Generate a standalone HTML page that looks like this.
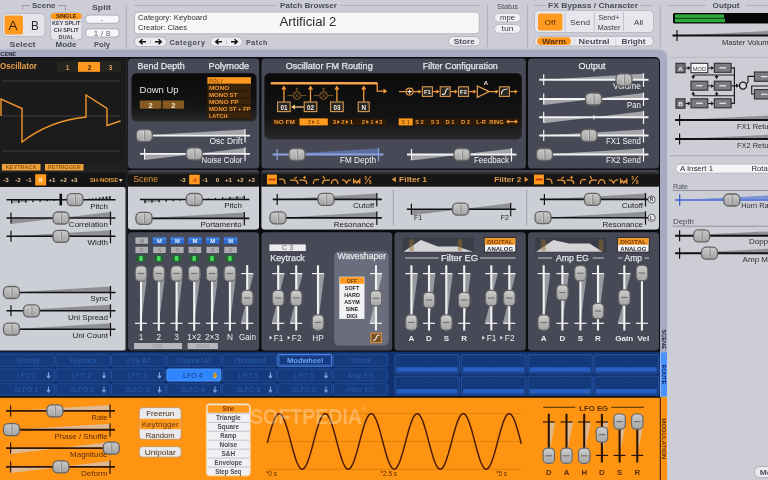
<!DOCTYPE html>
<html><head><meta charset="utf-8"><title>Surge</title>
<style>
html,body{margin:0;padding:0;background:#cdced5;overflow:hidden}
body{width:768px;height:480px;position:relative;font-family:"Liberation Sans", sans-serif}
svg{position:absolute;left:0;top:0;display:block;will-change:transform}
svg text{font-family:"Liberation Sans", sans-serif}
</style></head><body>
<svg width="768" height="480" viewBox="0 0 768 480">
<defs>
<linearGradient id="hg" x1="0" y1="0" x2="0" y2="1"><stop offset="0" stop-color="#cacaca"/><stop offset="0.5" stop-color="#b6b6b6"/><stop offset="1" stop-color="#a2a2a2"/></linearGradient>
<linearGradient id="vg" x1="0" y1="0" x2="0" y2="1"><stop offset="0" stop-color="#cecece"/><stop offset="0.5" stop-color="#b8b8b8"/><stop offset="1" stop-color="#a6a6a6"/></linearGradient>
<linearGradient id="dispg" x1="0" y1="0" x2="0" y2="1"><stop offset="0" stop-color="#0b0b0c"/><stop offset="0.7" stop-color="#141415"/><stop offset="1" stop-color="#2a2a2c"/></linearGradient>
<linearGradient id="oscg" x1="0" y1="0" x2="0" y2="1"><stop offset="0" stop-color="#1a1a1a"/><stop offset="0.8" stop-color="#1c1c1c"/><stop offset="1" stop-color="#2c2c2c"/></linearGradient>
<linearGradient id="stripg" x1="0" y1="0" x2="0" y2="1"><stop offset="0" stop-color="#474a56"/><stop offset="0.1" stop-color="#3a3c44"/><stop offset="0.28" stop-color="#181614"/><stop offset="1" stop-color="#181614"/></linearGradient>
<linearGradient id="frg" x1="0" y1="0" x2="0" y2="1"><stop offset="0" stop-color="#cdced5"/><stop offset="1" stop-color="#a8aac4"/></linearGradient>
</defs>
<rect x="0.00" y="0.00" width="768.00" height="480.00" fill="#cdced5" />
<path d="M0,48.5 H659 a8.5,8.5 0 0 1 8.5,8.5 V352.5 H0 Z" fill="#bcbdce"/>
<path d="M0,50 H659 a8,8 0 0 1 8,8 V352.5 H0 Z" fill="#a8aac4"/>
<text x="-3.60" y="56.10" font-size="5.3" fill="#23252e" text-anchor="start" font-weight="bold" textLength="19.8" lengthAdjust="spacingAndGlyphs" >SCENE</text>
<line x1="22.50" y1="5.00" x2="22.50" y2="10.00" stroke="#9a9cab" stroke-width="1.1" />
<line x1="22.50" y1="5.50" x2="30.00" y2="5.50" stroke="#9a9cab" stroke-width="1.1" />
<line x1="58.00" y1="5.50" x2="65.50" y2="5.50" stroke="#9a9cab" stroke-width="1.1" />
<line x1="65.50" y1="5.00" x2="65.50" y2="10.00" stroke="#9a9cab" stroke-width="1.1" />
<text x="43.80" y="8.00" font-size="7.5" fill="#4a4c5a" text-anchor="middle" font-weight="bold" textLength="23.5" lengthAdjust="spacingAndGlyphs" >Scene</text>
<rect x="2.50" y="13.50" width="42.50" height="23.00" fill="#e4e5ea" rx="4" stroke="#b9bbc8" stroke-width="1" />
<rect x="4.50" y="15.50" width="18.50" height="19.00" fill="#ff9a1e" rx="2" />
<text x="12.90" y="29.70" font-size="13.5" fill="#3a2408" text-anchor="middle" font-weight="normal" >A</text>
<text x="35.00" y="29.70" font-size="13.5" fill="#26262c" text-anchor="middle" font-weight="normal" textLength="7.8" lengthAdjust="spacingAndGlyphs" >B</text>
<text x="22.50" y="47.00" font-size="7.5" fill="#4a4c5a" text-anchor="middle" font-weight="bold" textLength="26.0" lengthAdjust="spacingAndGlyphs" >Select</text>
<rect x="50.50" y="12.50" width="31.50" height="27.50" fill="#e6e7ec" rx="4" stroke="#b9bbc8" stroke-width="1" />
<rect x="51.00" y="13.00" width="30.50" height="6.50" fill="#ff9a1e" rx="3" />
<text x="66.20" y="18.30" font-size="5.5" fill="#3a2a18" text-anchor="middle" font-weight="bold" >SINGLE</text>
<text x="66.20" y="25.30" font-size="5.5" fill="#3f414c" text-anchor="middle" font-weight="bold" >KEY SPLIT</text>
<text x="66.20" y="32.30" font-size="5.5" fill="#3f414c" text-anchor="middle" font-weight="bold" >CH SPLIT</text>
<text x="66.20" y="39.30" font-size="5.5" fill="#3f414c" text-anchor="middle" font-weight="bold" >DUAL</text>
<text x="66.00" y="47.00" font-size="7.5" fill="#4a4c5a" text-anchor="middle" font-weight="bold" textLength="21.0" lengthAdjust="spacingAndGlyphs" >Mode</text>
<text x="101.50" y="10.00" font-size="7.5" fill="#4a4c5a" text-anchor="middle" font-weight="bold" textLength="19.0" lengthAdjust="spacingAndGlyphs" >Split</text>
<rect x="85.50" y="15.00" width="33.80" height="8.30" fill="#f6f6f8" rx="4.1" stroke="#a9abb9" stroke-width="1" />
<text x="102.00" y="21.50" font-size="7" fill="#555" text-anchor="middle" font-weight="normal" >-</text>
<rect x="85.50" y="28.80" width="33.80" height="8.30" fill="#f6f6f8" rx="4.1" stroke="#a9abb9" stroke-width="1" />
<text x="102.00" y="35.70" font-size="7" fill="#6a6c78" text-anchor="middle" font-weight="normal" textLength="17.0" lengthAdjust="spacingAndGlyphs" >1 / 8</text>
<text x="102.00" y="47.00" font-size="7.5" fill="#4a4c5a" text-anchor="middle" font-weight="bold" textLength="16.0" lengthAdjust="spacingAndGlyphs" >Poly</text>
<line x1="126.30" y1="5.00" x2="126.30" y2="47.50" stroke="#aeb0be" stroke-width="1.2" />
<line x1="134.00" y1="5.50" x2="277.00" y2="5.50" stroke="#aeb0be" stroke-width="1" />
<line x1="340.00" y1="5.50" x2="480.00" y2="5.50" stroke="#aeb0be" stroke-width="1" />
<text x="308.50" y="8.00" font-size="7.5" fill="#4a4c5a" text-anchor="middle" font-weight="bold" textLength="57.0" lengthAdjust="spacingAndGlyphs" >Patch Browser</text>
<rect x="134.50" y="12.00" width="344.80" height="21.80" fill="#f7f7f8" rx="3.5" stroke="#b4b6c2" stroke-width="1" />
<text x="138.00" y="19.80" font-size="7.5" fill="#2e2e34" text-anchor="start" font-weight="normal" textLength="69.0" lengthAdjust="spacingAndGlyphs" >Category: Keyboard</text>
<text x="138.00" y="30.30" font-size="7.5" fill="#2e2e34" text-anchor="start" font-weight="normal" textLength="49.0" lengthAdjust="spacingAndGlyphs" >Creator: Claes</text>
<text x="279.40" y="26.00" font-size="12" fill="#2a2a30" text-anchor="start" font-weight="normal" textLength="57.0" lengthAdjust="spacingAndGlyphs" >Artificial 2</text>
<rect x="134.50" y="37.00" width="32.00" height="9.50" fill="#ececf0" rx="4.7" stroke="#b3b5c2" stroke-width="1" />
<line x1="150.50" y1="39.50" x2="150.50" y2="44.00" stroke="#c4c6d0" stroke-width="0.8" />
<path d="M146.0,41.7 H140.0 M142.5,39.3 L139.7,41.7 L142.5,44.1" stroke="#111" fill="none" stroke-width="1.4" />
<path d="M155.0,41.7 H161.0 M158.5,39.3 L161.3,41.7 L158.5,44.1" stroke="#111" fill="none" stroke-width="1.4" />
<text x="169.50" y="44.80" font-size="7.5" fill="#4a4c5a" text-anchor="start" font-weight="bold" textLength="36.0" lengthAdjust="spacingAndGlyphs" letter-spacing="0.6">Category</text>
<rect x="210.50" y="37.00" width="32.00" height="9.50" fill="#ececf0" rx="4.7" stroke="#b3b5c2" stroke-width="1" />
<line x1="226.50" y1="39.50" x2="226.50" y2="44.00" stroke="#c4c6d0" stroke-width="0.8" />
<path d="M222.0,41.7 H216.0 M218.5,39.3 L215.7,41.7 L218.5,44.1" stroke="#111" fill="none" stroke-width="1.4" />
<path d="M231.0,41.7 H237.0 M234.5,39.3 L237.3,41.7 L234.5,44.1" stroke="#111" fill="none" stroke-width="1.4" />
<text x="246.00" y="44.80" font-size="7.5" fill="#4a4c5a" text-anchor="start" font-weight="bold" textLength="22.0" lengthAdjust="spacingAndGlyphs" letter-spacing="0.6">Patch</text>
<rect x="448.50" y="36.50" width="31.50" height="9.50" fill="#ececf0" rx="4.7" stroke="#b3b5c2" stroke-width="1" />
<text x="464.30" y="44.00" font-size="7.5" fill="#4a4c58" text-anchor="middle" font-weight="bold" textLength="21.0" lengthAdjust="spacingAndGlyphs" >Store</text>
<line x1="487.50" y1="5.00" x2="487.50" y2="47.50" stroke="#aeb0be" stroke-width="1.2" />
<text x="507.50" y="8.50" font-size="7" fill="#4a4c5a" text-anchor="middle" font-weight="normal" textLength="21.0" lengthAdjust="spacingAndGlyphs" >Status</text>
<rect x="494.50" y="13.20" width="26.00" height="8.80" fill="#f1f1f4" rx="4.4" stroke="#b9bbc8" stroke-width="1" />
<text x="507.50" y="20.00" font-size="7.5" fill="#3a3c46" text-anchor="middle" font-weight="normal" textLength="15.0" lengthAdjust="spacingAndGlyphs" >mpe</text>
<rect x="494.50" y="24.50" width="26.00" height="8.80" fill="#f1f1f4" rx="4.4" stroke="#b9bbc8" stroke-width="1" />
<text x="507.50" y="31.30" font-size="7.5" fill="#3a3c46" text-anchor="middle" font-weight="normal" textLength="12.0" lengthAdjust="spacingAndGlyphs" >tun</text>
<line x1="527.50" y1="5.00" x2="527.50" y2="47.50" stroke="#aeb0be" stroke-width="1.2" />
<line x1="534.00" y1="5.50" x2="546.00" y2="5.50" stroke="#aeb0be" stroke-width="1" />
<line x1="640.00" y1="5.50" x2="653.00" y2="5.50" stroke="#aeb0be" stroke-width="1" />
<text x="593.00" y="8.00" font-size="7.5" fill="#4a4c5a" text-anchor="middle" font-weight="bold" textLength="90.0" lengthAdjust="spacingAndGlyphs" >FX Bypass / Character</text>
<rect x="534.50" y="10.50" width="119.00" height="22.00" fill="#e6e7ec" rx="4" stroke="#b9bbc8" stroke-width="1" />
<rect x="538.00" y="13.50" width="24.50" height="17.00" fill="#ff9a1e" rx="2" />
<text x="550.00" y="24.70" font-size="7.5" fill="#5a3408" text-anchor="middle" font-weight="normal" textLength="11.0" lengthAdjust="spacingAndGlyphs" >Off</text>
<line x1="565.00" y1="12.00" x2="565.00" y2="31.00" stroke="#c0c2cd" stroke-width="1" />
<line x1="594.30" y1="12.00" x2="594.30" y2="31.00" stroke="#c0c2cd" stroke-width="1" />
<line x1="623.50" y1="12.00" x2="623.50" y2="31.00" stroke="#c0c2cd" stroke-width="1" />
<text x="580.00" y="24.70" font-size="7.5" fill="#3a3c46" text-anchor="middle" font-weight="normal" textLength="20.0" lengthAdjust="spacingAndGlyphs" >Send</text>
<text x="609.00" y="20.20" font-size="7" fill="#3a3c46" text-anchor="middle" font-weight="normal" textLength="21.0" lengthAdjust="spacingAndGlyphs" >Send+</text>
<text x="609.00" y="29.50" font-size="7" fill="#3a3c46" text-anchor="middle" font-weight="normal" textLength="23.0" lengthAdjust="spacingAndGlyphs" >Master</text>
<text x="638.50" y="24.70" font-size="7.5" fill="#3a3c46" text-anchor="middle" font-weight="normal" textLength="9.0" lengthAdjust="spacingAndGlyphs" >All</text>
<rect x="534.50" y="36.30" width="119.00" height="9.70" fill="#ececf0" rx="4.8" stroke="#b3b5c2" stroke-width="1" />
<rect x="537.00" y="37.30" width="34.00" height="7.70" fill="#ff9a1e" rx="3.8" />
<text x="554.00" y="44.00" font-size="7.5" fill="#5a2e08" text-anchor="middle" font-weight="bold" textLength="24.0" lengthAdjust="spacingAndGlyphs" >Warm</text>
<text x="594.00" y="44.00" font-size="7.5" fill="#4a4c58" text-anchor="middle" font-weight="bold" textLength="31.0" lengthAdjust="spacingAndGlyphs" >Neutral</text>
<text x="633.50" y="44.00" font-size="7.5" fill="#4a4c58" text-anchor="middle" font-weight="bold" textLength="24.0" lengthAdjust="spacingAndGlyphs" >Bright</text>
<line x1="574.50" y1="38.00" x2="574.50" y2="44.50" stroke="#c8cad4" stroke-width="0.8" />
<line x1="615.70" y1="38.00" x2="615.70" y2="44.50" stroke="#c8cad4" stroke-width="0.8" />
<line x1="660.30" y1="5.00" x2="660.30" y2="47.50" stroke="#aeb0be" stroke-width="1.2" />
<line x1="667.00" y1="5.50" x2="706.00" y2="5.50" stroke="#aeb0be" stroke-width="1" />
<line x1="746.00" y1="5.50" x2="768.00" y2="5.50" stroke="#aeb0be" stroke-width="1" />
<text x="726.00" y="8.00" font-size="7.5" fill="#4a4c5a" text-anchor="middle" font-weight="bold" textLength="27.0" lengthAdjust="spacingAndGlyphs" >Output</text>
<rect x="673.00" y="13.00" width="100.00" height="10.50" fill="#060606" rx="1.5" />
<rect x="675.00" y="14.30" width="49.00" height="3.60" fill="#2fa83c" />
<rect x="675.00" y="18.60" width="50.00" height="3.60" fill="#2fa83c" />
<polygon points="677.00,35.40 800.00,29.40 800.00,35.40" fill="rgba(0,0,0,0.30)" />
<line x1="672.50" y1="35.40" x2="805.00" y2="35.40" stroke="#111" stroke-width="2" />
<line x1="677.00" y1="29.90" x2="677.00" y2="40.90" stroke="#111" stroke-width="1.2" />
<text x="721.90" y="44.60" font-size="7.5" fill="#2e2e34" text-anchor="start" font-weight="normal" textLength="51.0" lengthAdjust="spacingAndGlyphs" >Master Volume</text>
<path d="M0,57 H655 a5,5 0 0 1 5,5 V352 H0 Z" fill="#0c0c0e"/>
<rect x="-3.00" y="58.30" width="128.50" height="128.20" fill="url(#oscg)" rx="2" />
<rect x="125.50" y="57.50" width="2.00" height="294.00" fill="#24262c" />
<text x="0.00" y="68.50" font-size="8.5" fill="#e8a04a" text-anchor="start" font-weight="bold" textLength="37.0" lengthAdjust="spacingAndGlyphs" >Oscillator</text>
<rect x="57.00" y="61.50" width="64.00" height="10.50" fill="#26241f" rx="1" />
<rect x="78.00" y="62.00" width="22.00" height="9.80" fill="#ff9a1e" />
<text x="67.50" y="69.50" font-size="6.5" fill="#d9a05a" text-anchor="middle" font-weight="bold" >1</text>
<text x="89.50" y="69.50" font-size="6.5" fill="#3a2208" text-anchor="middle" font-weight="bold" >2</text>
<text x="110.50" y="69.50" font-size="6.5" fill="#d9a05a" text-anchor="middle" font-weight="bold" >3</text>
<line x1="2.00" y1="81.00" x2="120.00" y2="81.00" stroke="#3f3f3f" stroke-width="1" />
<line x1="2.00" y1="116.00" x2="120.00" y2="116.00" stroke="#3f3f3f" stroke-width="1" />
<line x1="2.00" y1="151.00" x2="120.00" y2="151.00" stroke="#3f3f3f" stroke-width="1" />
<path d="M1,116 L1,99 L22,108.5 L22,142 C40,128 62,119.5 86,117 L86,95 L107,108.5 L107,125.5 L120.5,121" stroke="#f0962a" fill="none" stroke-width="1.4" stroke-linejoin="miter"/>
<rect x="2.00" y="164.00" width="38.50" height="6.50" fill="#f2a23a" />
<text x="21.20" y="169.30" font-size="5.2" fill="#8a5a18" text-anchor="middle" font-weight="bold" textLength="31.0" lengthAdjust="spacingAndGlyphs" >KEYTRACK</text>
<rect x="45.00" y="164.00" width="38.50" height="6.50" fill="#f2a23a" />
<text x="64.20" y="169.30" font-size="5.2" fill="#8a5a18" text-anchor="middle" font-weight="bold" textLength="33.0" lengthAdjust="spacingAndGlyphs" >RETRIGGER</text>
<rect x="0.00" y="172.50" width="125.50" height="14.00" fill="#141414" />
<rect x="35.20" y="174.20" width="11.00" height="11.30" fill="#ff9a1e" />
<text x="6.00" y="182.30" font-size="6.2" fill="#e8c79a" text-anchor="middle" font-weight="bold" >-3</text>
<text x="18.00" y="182.30" font-size="6.2" fill="#e8c79a" text-anchor="middle" font-weight="bold" >-2</text>
<text x="29.00" y="182.30" font-size="6.2" fill="#e8c79a" text-anchor="middle" font-weight="bold" >-1</text>
<text x="52.00" y="182.30" font-size="6.2" fill="#e8c79a" text-anchor="middle" font-weight="bold" >+1</text>
<text x="63.50" y="182.30" font-size="6.2" fill="#e8c79a" text-anchor="middle" font-weight="bold" >+2</text>
<text x="74.00" y="182.30" font-size="6.2" fill="#e8c79a" text-anchor="middle" font-weight="bold" >+3</text>
<text x="40.70" y="182.30" font-size="6.2" fill="#fff" text-anchor="middle" font-weight="bold" >0</text>
<text x="90.00" y="182.20" font-size="6" fill="#f0a040" text-anchor="start" font-weight="bold" textLength="28.0" lengthAdjust="spacingAndGlyphs" >SH-NOISE</text>
<polygon points="118.80,179.00 122.60,179.00 120.70,182.00" fill="#f6d8b0" />
<rect x="-3.00" y="187.00" width="128.50" height="163.60" fill="#cdcfd6" rx="2" />
<polygon points="11.20,199.70 11.20,202.90 26.90,201.70 26.90,199.70" fill="rgba(0,0,0,0.25)" />
<polygon points="98.50,199.70 98.50,198.10 110.50,196.50 110.50,199.70" fill="rgba(0,0,0,0.25)" />
<line x1="11.70" y1="199.70" x2="11.70" y2="203.50" stroke="#111" stroke-width="1.25" />
<line x1="18.80" y1="199.70" x2="18.80" y2="203.07" stroke="#111" stroke-width="1.25" />
<line x1="25.90" y1="199.70" x2="25.90" y2="202.63" stroke="#111" stroke-width="1.25" />
<line x1="33.00" y1="199.70" x2="33.00" y2="202.20" stroke="#111" stroke-width="1.25" />
<line x1="40.10" y1="199.70" x2="40.10" y2="201.77" stroke="#111" stroke-width="1.25" />
<line x1="47.20" y1="199.70" x2="47.20" y2="201.33" stroke="#111" stroke-width="1.25" />
<line x1="54.30" y1="199.70" x2="54.30" y2="200.90" stroke="#111" stroke-width="1.25" />
<line x1="110.00" y1="196.00" x2="110.00" y2="199.70" stroke="#111" stroke-width="1.25" />
<line x1="106.50" y1="196.43" x2="106.50" y2="199.70" stroke="#111" stroke-width="1.25" />
<line x1="103.00" y1="196.87" x2="103.00" y2="199.70" stroke="#111" stroke-width="1.25" />
<line x1="99.50" y1="197.30" x2="99.50" y2="199.70" stroke="#111" stroke-width="1.25" />
<line x1="96.00" y1="197.73" x2="96.00" y2="199.70" stroke="#111" stroke-width="1.25" />
<line x1="92.50" y1="198.17" x2="92.50" y2="199.70" stroke="#111" stroke-width="1.25" />
<line x1="89.00" y1="198.60" x2="89.00" y2="199.70" stroke="#111" stroke-width="1.25" />
<line x1="6.50" y1="199.70" x2="115.50" y2="199.70" stroke="#111" stroke-width="1.6" />
<rect x="59.50" y="193.70" width="2.60" height="11.70" fill="#111" />
<rect x="67.00" y="193.70" width="16.00" height="12.00" fill="url(#hg)" rx="4.6" stroke="#636363" stroke-width="1.3" />
<line x1="74.50" y1="195.00" x2="74.50" y2="204.40" stroke="#d2d2d2" stroke-width="0.9" />
<line x1="75.40" y1="195.00" x2="75.40" y2="204.40" stroke="#808080" stroke-width="0.9" />
<text x="108.00" y="208.50" font-size="8" fill="#222" text-anchor="end" font-weight="normal" >Pitch</text>
<polygon points="11.00,218.00 11.00,224.00 60.75,218.00" fill="rgba(0,0,0,0.30)" />
<polygon points="60.75,218.00 110.50,212.00 110.50,218.00" fill="rgba(0,0,0,0.30)" />
<line x1="6.50" y1="218.00" x2="115.50" y2="218.00" stroke="#111" stroke-width="1.6" />
<line x1="11.00" y1="212.50" x2="11.00" y2="223.50" stroke="#111" stroke-width="1.2" />
<line x1="110.50" y1="211.50" x2="110.50" y2="225.00" stroke="#111" stroke-width="1.2" />
<text x="108.00" y="226.80" font-size="8" fill="#222" text-anchor="end" font-weight="normal" >Correlation</text>
<rect x="53.00" y="212.00" width="16.00" height="12.00" fill="url(#hg)" rx="4.6" stroke="#636363" stroke-width="1.3" />
<line x1="60.50" y1="213.30" x2="60.50" y2="222.70" stroke="#d2d2d2" stroke-width="0.9" />
<line x1="61.40" y1="213.30" x2="61.40" y2="222.70" stroke="#808080" stroke-width="0.9" />
<polygon points="11.00,236.30 110.50,230.30 110.50,236.30" fill="rgba(0,0,0,0.30)" />
<line x1="6.50" y1="236.30" x2="115.50" y2="236.30" stroke="#111" stroke-width="1.6" />
<line x1="11.00" y1="230.80" x2="11.00" y2="241.80" stroke="#111" stroke-width="1.2" />
<line x1="110.50" y1="229.80" x2="110.50" y2="243.30" stroke="#111" stroke-width="1.2" />
<text x="108.00" y="245.10" font-size="8" fill="#222" text-anchor="end" font-weight="normal" >Width</text>
<rect x="53.00" y="230.30" width="16.00" height="12.00" fill="url(#hg)" rx="4.6" stroke="#636363" stroke-width="1.3" />
<line x1="60.50" y1="231.60" x2="60.50" y2="241.00" stroke="#d2d2d2" stroke-width="0.9" />
<line x1="61.40" y1="231.60" x2="61.40" y2="241.00" stroke="#808080" stroke-width="0.9" />
<polygon points="11.00,292.50 110.50,286.50 110.50,292.50" fill="rgba(0,0,0,0.30)" />
<line x1="6.50" y1="292.50" x2="115.50" y2="292.50" stroke="#111" stroke-width="1.6" />
<line x1="110.50" y1="286.00" x2="110.50" y2="299.50" stroke="#111" stroke-width="1.2" />
<text x="108.00" y="301.30" font-size="8" fill="#222" text-anchor="end" font-weight="normal" >Sync</text>
<rect x="3.50" y="286.50" width="16.00" height="12.00" fill="url(#hg)" rx="4.6" stroke="#636363" stroke-width="1.3" />
<line x1="11.00" y1="287.80" x2="11.00" y2="297.20" stroke="#d2d2d2" stroke-width="0.9" />
<line x1="11.90" y1="287.80" x2="11.90" y2="297.20" stroke="#808080" stroke-width="0.9" />
<polygon points="11.00,310.80 110.50,304.80 110.50,310.80" fill="rgba(0,0,0,0.30)" />
<line x1="6.50" y1="310.80" x2="115.50" y2="310.80" stroke="#111" stroke-width="1.6" />
<line x1="11.00" y1="305.30" x2="11.00" y2="316.30" stroke="#111" stroke-width="1.2" />
<line x1="110.50" y1="304.30" x2="110.50" y2="317.80" stroke="#111" stroke-width="1.2" />
<text x="108.00" y="319.60" font-size="8" fill="#222" text-anchor="end" font-weight="normal" >Uni Spread</text>
<rect x="23.50" y="304.80" width="16.00" height="12.00" fill="url(#hg)" rx="4.6" stroke="#636363" stroke-width="1.3" />
<line x1="31.00" y1="306.10" x2="31.00" y2="315.50" stroke="#d2d2d2" stroke-width="0.9" />
<line x1="31.90" y1="306.10" x2="31.90" y2="315.50" stroke="#808080" stroke-width="0.9" />
<polygon points="11.00,329.20 110.50,323.20 110.50,329.20" fill="rgba(0,0,0,0.30)" />
<line x1="6.50" y1="329.20" x2="115.50" y2="329.20" stroke="#111" stroke-width="1.6" />
<line x1="110.50" y1="322.70" x2="110.50" y2="336.20" stroke="#111" stroke-width="1.2" />
<text x="108.00" y="338.00" font-size="8" fill="#222" text-anchor="end" font-weight="normal" >Uni Count</text>
<rect x="3.50" y="323.20" width="16.00" height="12.00" fill="url(#hg)" rx="4.6" stroke="#636363" stroke-width="1.3" />
<line x1="11.00" y1="324.50" x2="11.00" y2="333.90" stroke="#d2d2d2" stroke-width="0.9" />
<line x1="11.90" y1="324.50" x2="11.90" y2="333.90" stroke="#808080" stroke-width="0.9" />
<rect x="128.00" y="58.50" width="131.20" height="109.90" fill="#474a56" rx="3.5" />
<text x="137.60" y="68.80" font-size="8.7" fill="#e6e6ea" text-anchor="start" font-weight="normal" textLength="47.0" lengthAdjust="spacingAndGlyphs" stroke="#e6e6ea" stroke-width="0.25">Bend Depth</text>
<text x="208.60" y="68.80" font-size="8.7" fill="#e6e6ea" text-anchor="start" font-weight="normal" textLength="40.5" lengthAdjust="spacingAndGlyphs" stroke="#e6e6ea" stroke-width="0.25">Polymode</text>
<rect x="131.50" y="73.20" width="125.00" height="48.30" fill="url(#dispg)" rx="5" />
<text x="139.60" y="92.70" font-size="9" fill="#e6e6e6" text-anchor="start" font-weight="normal" textLength="39.0" lengthAdjust="spacingAndGlyphs" >Down Up</text>
<rect x="139.80" y="100.50" width="21.50" height="8.20" fill="#865a22" />
<rect x="162.60" y="100.50" width="21.50" height="8.20" fill="#865a22" />
<text x="150.50" y="107.60" font-size="7.5" fill="#f4ead8" text-anchor="middle" font-weight="bold" >2</text>
<text x="173.30" y="107.60" font-size="7.5" fill="#f4ead8" text-anchor="middle" font-weight="bold" >2</text>
<rect x="207.20" y="77.00" width="43.90" height="42.30" fill="#1e1206" />
<rect x="207.40" y="77.20" width="43.50" height="6.50" fill="#ff9a1e" />
<text x="208.90" y="82.80" font-size="5.8" fill="#9a5a14" text-anchor="start" font-weight="bold" textLength="14.4" lengthAdjust="spacingAndGlyphs" >POLY</text>
<rect x="207.40" y="84.20" width="43.50" height="6.40" fill="#3a240a" />
<text x="208.90" y="89.80" font-size="5.8" fill="#ee9838" text-anchor="start" font-weight="bold" textLength="20.4" lengthAdjust="spacingAndGlyphs" >MONO</text>
<rect x="207.40" y="91.20" width="43.50" height="6.40" fill="#3a240a" />
<text x="208.90" y="96.80" font-size="5.8" fill="#ee9838" text-anchor="start" font-weight="bold" textLength="28.5" lengthAdjust="spacingAndGlyphs" >MONO ST</text>
<rect x="207.40" y="98.20" width="43.50" height="6.40" fill="#3a240a" />
<text x="208.90" y="103.80" font-size="5.8" fill="#ee9838" text-anchor="start" font-weight="bold" textLength="29.6" lengthAdjust="spacingAndGlyphs" >MONO FP</text>
<rect x="207.40" y="105.20" width="43.50" height="6.40" fill="#3a240a" />
<text x="208.90" y="110.80" font-size="5.8" fill="#ee9838" text-anchor="start" font-weight="bold" textLength="41.8" lengthAdjust="spacingAndGlyphs" >MONO ST + FP</text>
<rect x="207.40" y="112.20" width="43.50" height="6.40" fill="#3a240a" />
<text x="208.90" y="117.80" font-size="5.8" fill="#ee9838" text-anchor="start" font-weight="bold" textLength="18.7" lengthAdjust="spacingAndGlyphs" >LATCH</text>
<polygon points="140.50,135.60 245.00,129.60 245.00,135.60" fill="rgba(255,255,255,0.5)" />
<line x1="136.00" y1="135.60" x2="250.00" y2="135.60" stroke="#f2f2f2" stroke-width="1.9" />
<line x1="245.00" y1="129.10" x2="245.00" y2="142.60" stroke="#f2f2f2" stroke-width="1.2" />
<text x="242.50" y="144.40" font-size="8.3" fill="#f4f4f4" text-anchor="end" font-weight="normal" textLength="33.0" lengthAdjust="spacingAndGlyphs" >Osc Drift</text>
<rect x="136.30" y="129.60" width="16.00" height="12.00" fill="url(#hg)" rx="4.6" stroke="#636363" stroke-width="1.3" />
<line x1="143.80" y1="130.90" x2="143.80" y2="140.30" stroke="#d2d2d2" stroke-width="0.9" />
<line x1="144.70" y1="130.90" x2="144.70" y2="140.30" stroke="#808080" stroke-width="0.9" />
<polygon points="144.60,153.90 144.60,159.90 194.80,153.90" fill="rgba(255,255,255,0.5)" />
<polygon points="194.80,153.90 245.00,147.90 245.00,153.90" fill="rgba(255,255,255,0.5)" />
<line x1="140.10" y1="153.90" x2="250.00" y2="153.90" stroke="#f2f2f2" stroke-width="1.9" />
<line x1="144.60" y1="148.40" x2="144.60" y2="159.40" stroke="#f2f2f2" stroke-width="1.2" />
<line x1="245.00" y1="147.40" x2="245.00" y2="160.90" stroke="#f2f2f2" stroke-width="1.2" />
<text x="242.50" y="162.70" font-size="8.3" fill="#f4f4f4" text-anchor="end" font-weight="normal" textLength="41.0" lengthAdjust="spacingAndGlyphs" >Noise Color</text>
<rect x="186.30" y="147.90" width="16.00" height="12.00" fill="url(#hg)" rx="4.6" stroke="#636363" stroke-width="1.3" />
<line x1="193.80" y1="149.20" x2="193.80" y2="158.60" stroke="#d2d2d2" stroke-width="0.9" />
<line x1="194.70" y1="149.20" x2="194.70" y2="158.60" stroke="#808080" stroke-width="0.9" />
<rect x="261.50" y="58.50" width="264.40" height="109.90" fill="#474a56" rx="3.5" />
<text x="285.70" y="68.80" font-size="8.7" fill="#e6e6ea" text-anchor="start" font-weight="normal" textLength="87.0" lengthAdjust="spacingAndGlyphs" stroke="#e6e6ea" stroke-width="0.25">Oscillator FM Routing</text>
<text x="422.80" y="68.80" font-size="8.7" fill="#e6e6ea" text-anchor="start" font-weight="normal" textLength="75.0" lengthAdjust="spacingAndGlyphs" stroke="#e6e6ea" stroke-width="0.25">Filter Configuration</text>
<rect x="264.40" y="73.20" width="257.40" height="66.30" fill="url(#dispg)" rx="5" />
<path d="M270.8,83.3 H377.4" stroke="#f6a64a" fill="none" stroke-width="2.6" />
<path d="M377.2,83.3 V91.2 H384" stroke="#f29a38" fill="none" stroke-width="1.3" />
<polygon points="383.50,88.60 387.30,91.20 383.50,93.80" fill="#f29a38" />
<line x1="283.90" y1="101.80" x2="283.90" y2="88.00" stroke="#f29a38" stroke-width="1.3" />
<polygon points="281.30,89.50 283.90,85.60 286.50,89.50" fill="#f29a38" />
<rect x="277.60" y="102.00" width="12.60" height="9.60" fill="#2a2622" stroke="#d89a50" stroke-width="1.1" />
<text x="283.90" y="109.50" font-size="6.3" fill="#f6f0e6" text-anchor="middle" font-weight="bold" >01</text>
<line x1="310.50" y1="101.80" x2="310.50" y2="88.00" stroke="#f29a38" stroke-width="1.3" />
<polygon points="307.90,89.50 310.50,85.60 313.10,89.50" fill="#f29a38" />
<rect x="304.20" y="102.00" width="12.60" height="9.60" fill="#2a2622" stroke="#d89a50" stroke-width="1.1" />
<text x="310.50" y="109.50" font-size="6.3" fill="#f6f0e6" text-anchor="middle" font-weight="bold" >02</text>
<line x1="336.90" y1="101.80" x2="336.90" y2="88.00" stroke="#f29a38" stroke-width="1.3" />
<polygon points="334.30,89.50 336.90,85.60 339.50,89.50" fill="#f29a38" />
<rect x="330.60" y="102.00" width="12.60" height="9.60" fill="#2a2622" stroke="#d89a50" stroke-width="1.1" />
<text x="336.90" y="109.50" font-size="6.3" fill="#f6f0e6" text-anchor="middle" font-weight="bold" >03</text>
<line x1="363.70" y1="101.80" x2="363.70" y2="88.00" stroke="#f29a38" stroke-width="1.3" />
<polygon points="361.10,89.50 363.70,85.60 366.30,89.50" fill="#f29a38" />
<rect x="358.20" y="102.00" width="11.00" height="9.60" fill="#2a2622" stroke="#d89a50" stroke-width="1.1" />
<text x="363.70" y="109.50" font-size="6.3" fill="#f6f0e6" text-anchor="middle" font-weight="bold" >N</text>
<circle cx="296.9" cy="95.6" r="3.7" fill="none" stroke="#7a5524" stroke-width="1.1"/>
<path d="M294.59999999999997,93.3 L299.2,97.89999999999999 M294.59999999999997,97.89999999999999 L299.2,93.3" stroke="#7a5524" fill="none" stroke-width="1" />
<line x1="287.40" y1="95.60" x2="292.70" y2="95.60" stroke="#7a5524" stroke-width="1" />
<line x1="301.10" y1="95.60" x2="306.40" y2="95.60" stroke="#7a5524" stroke-width="1" />
<line x1="296.90" y1="91.50" x2="296.90" y2="88.50" stroke="#7a5524" stroke-width="1" />
<polygon points="295.30,89.20 296.90,87.20 298.50,89.20" fill="#7a5524" />
<circle cx="323.6" cy="95.6" r="3.7" fill="none" stroke="#7a5524" stroke-width="1.1"/>
<path d="M321.3,93.3 L325.90000000000003,97.89999999999999 M321.3,97.89999999999999 L325.90000000000003,93.3" stroke="#7a5524" fill="none" stroke-width="1" />
<line x1="314.10" y1="95.60" x2="319.40" y2="95.60" stroke="#7a5524" stroke-width="1" />
<line x1="327.80" y1="95.60" x2="333.10" y2="95.60" stroke="#7a5524" stroke-width="1" />
<line x1="323.60" y1="91.50" x2="323.60" y2="88.50" stroke="#7a5524" stroke-width="1" />
<polygon points="322.00,89.20 323.60,87.20 325.20,89.20" fill="#7a5524" />
<line x1="294.00" y1="107.00" x2="303.80" y2="107.00" stroke="#f6c78c" stroke-width="1.3" />
<polygon points="295.00,104.40 291.00,107.00 295.00,109.60" fill="#f6c78c" />
<rect x="271.50" y="118.40" width="114.50" height="7.00" fill="#2c1a07" />
<rect x="398.70" y="118.40" width="120.50" height="7.00" fill="#2c1a07" />
<text x="274.00" y="123.80" font-size="5.8" fill="#f29a38" text-anchor="start" font-weight="bold" textLength="21.0" lengthAdjust="spacingAndGlyphs" >NO FM</text>
<rect x="299.50" y="118.40" width="28.30" height="7.00" fill="#ff9a1e" />
<text x="309.30" y="124.00" font-size="6" fill="#8a5210" text-anchor="middle" font-weight="bold" >2</text>
<polygon points="312.20,119.90 315.00,121.90 312.20,123.90" fill="#8a5210" />
<text x="317.90" y="124.00" font-size="6" fill="#8a5210" text-anchor="middle" font-weight="bold" >1</text>
<text x="334.30" y="124.00" font-size="6" fill="#f29a38" text-anchor="middle" font-weight="bold" >3</text>
<polygon points="337.20,119.90 340.00,121.90 337.20,123.90" fill="#f29a38" />
<text x="342.90" y="124.00" font-size="6" fill="#f29a38" text-anchor="middle" font-weight="bold" >2</text>
<polygon points="345.80,119.90 348.60,121.90 345.80,123.90" fill="#f29a38" />
<text x="351.50" y="124.00" font-size="6" fill="#f29a38" text-anchor="middle" font-weight="bold" >1</text>
<text x="363.40" y="124.00" font-size="6" fill="#f29a38" text-anchor="middle" font-weight="bold" >2</text>
<polygon points="366.30,119.90 369.10,121.90 366.30,123.90" fill="#f29a38" />
<text x="372.00" y="124.00" font-size="6" fill="#f29a38" text-anchor="middle" font-weight="bold" >1</text>
<polygon points="377.70,119.90 374.90,121.90 377.70,123.90" fill="#f29a38" />
<text x="380.60" y="124.00" font-size="6" fill="#f29a38" text-anchor="middle" font-weight="bold" >3</text>
<line x1="399.00" y1="91.60" x2="405.80" y2="91.60" stroke="#f29a38" stroke-width="1.2" />
<circle cx="409.6" cy="91.6" r="3.5" fill="none" stroke="#f29a38" stroke-width="1.2"/>
<path d="M407.4,91.6 H411.8 M409.6,89.39999999999999 V93.8" stroke="#f6f0e6" fill="none" stroke-width="1.1" />
<line x1="413.20" y1="91.60" x2="419.50" y2="91.60" stroke="#f29a38" stroke-width="1.2" />
<polygon points="418.50,89.40 421.50,91.60 418.50,93.80" fill="#f29a38" />
<rect x="422.40" y="86.80" width="10.00" height="9.60" fill="#2a2622" stroke="#d89a50" stroke-width="1.1" />
<text x="427.40" y="93.90" font-size="5.8" fill="#f6f0e6" text-anchor="middle" font-weight="bold" >F1</text>
<line x1="433.00" y1="91.60" x2="437.50" y2="91.60" stroke="#f29a38" stroke-width="1.2" />
<polygon points="436.50,89.40 439.50,91.60 436.50,93.80" fill="#f29a38" />
<rect x="440.20" y="86.80" width="10.00" height="9.60" fill="#2a2622" stroke="#d89a50" stroke-width="1.1" />
<path d="M442,94.39999999999999 H444.2 C446,94.39999999999999 445,88.8 447.5,88.8 H448.6" stroke="#f6f0e6" fill="none" stroke-width="1.1" />
<line x1="451.00" y1="91.60" x2="455.70" y2="91.60" stroke="#f29a38" stroke-width="1.2" />
<polygon points="454.70,89.40 457.70,91.60 454.70,93.80" fill="#f29a38" />
<rect x="458.50" y="86.80" width="10.00" height="9.60" fill="#2a2622" stroke="#d89a50" stroke-width="1.1" />
<text x="463.50" y="93.90" font-size="5.8" fill="#f6f0e6" text-anchor="middle" font-weight="bold" >F2</text>
<line x1="469.30" y1="91.60" x2="474.40" y2="91.60" stroke="#f29a38" stroke-width="1.2" />
<polygon points="473.40,89.40 476.40,91.60 473.40,93.80" fill="#f29a38" />
<path d="M477.3,86.0 L489.2,91.6 L477.3,97.19999999999999 Z" stroke="#e8a052" fill="none" stroke-width="1.2" />
<text x="485.80" y="85.20" font-size="5.8" fill="#f6f0e6" text-anchor="middle" font-weight="bold" >A</text>
<line x1="490.00" y1="91.60" x2="496.60" y2="91.60" stroke="#f29a38" stroke-width="1.2" />
<polygon points="495.60,89.40 498.60,91.60 495.60,93.80" fill="#f29a38" />
<rect x="499.40" y="86.80" width="10.00" height="9.60" fill="#2a2622" stroke="#d89a50" stroke-width="1.1" />
<path d="M501.3,94.6 C501.3,90.6 503,89.0 507.6,89.0" stroke="#f6f0e6" fill="none" stroke-width="1.1" />
<line x1="510.20" y1="91.60" x2="515.80" y2="91.60" stroke="#f29a38" stroke-width="1.2" />
<polygon points="514.80,89.40 517.80,91.60 514.80,93.80" fill="#f29a38" />
<rect x="398.70" y="118.40" width="14.00" height="7.00" fill="#ff9a1e" />
<text x="405.70" y="124.00" font-size="5.8" fill="#8a5210" text-anchor="middle" font-weight="bold" >S 1</text>
<text x="419.50" y="123.80" font-size="5.8" fill="#f29a38" text-anchor="middle" font-weight="bold" >S 2</text>
<text x="435.00" y="123.80" font-size="5.8" fill="#f29a38" text-anchor="middle" font-weight="bold" >S 3</text>
<text x="450.00" y="123.80" font-size="5.8" fill="#f29a38" text-anchor="middle" font-weight="bold" >D 1</text>
<text x="465.50" y="123.80" font-size="5.8" fill="#f29a38" text-anchor="middle" font-weight="bold" >D 2</text>
<text x="481.00" y="123.80" font-size="5.8" fill="#f29a38" text-anchor="middle" font-weight="bold" >L-R</text>
<text x="496.50" y="123.80" font-size="5.8" fill="#f29a38" text-anchor="middle" font-weight="bold" >RING</text>
<path d="M507.5,121.6 H516.5" stroke="#f29a38" fill="none" stroke-width="1.2" />
<polygon points="509.00,119.50 506.00,121.60 509.00,123.70" fill="#f29a38" />
<polygon points="515.00,119.50 518.00,121.60 515.00,123.70" fill="#f29a38" />
<polygon points="277.20,154.50 378.50,148.50 378.50,154.50" fill="rgba(110,135,215,0.6)" />
<line x1="272.70" y1="154.50" x2="383.50" y2="154.50" stroke="#8fa2e0" stroke-width="1.9" />
<line x1="277.20" y1="149.00" x2="277.20" y2="160.00" stroke="#8fa2e0" stroke-width="1.2" />
<line x1="378.50" y1="148.00" x2="378.50" y2="161.50" stroke="#8fa2e0" stroke-width="1.2" />
<text x="376.00" y="163.30" font-size="8.3" fill="#f4f4f4" text-anchor="end" font-weight="normal" textLength="36.0" lengthAdjust="spacingAndGlyphs" >FM Depth</text>
<rect x="289.00" y="148.50" width="16.00" height="12.00" fill="url(#hg)" rx="4.6" stroke="#636363" stroke-width="1.3" />
<line x1="296.50" y1="149.80" x2="296.50" y2="159.20" stroke="#d2d2d2" stroke-width="0.9" />
<line x1="297.40" y1="149.80" x2="297.40" y2="159.20" stroke="#808080" stroke-width="0.9" />
<polygon points="411.50,154.50 411.50,160.50 461.50,154.50" fill="rgba(255,255,255,0.5)" />
<polygon points="461.50,154.50 511.50,148.50 511.50,154.50" fill="rgba(255,255,255,0.5)" />
<line x1="407.00" y1="154.50" x2="516.50" y2="154.50" stroke="#f2f2f2" stroke-width="1.9" />
<line x1="411.50" y1="149.00" x2="411.50" y2="160.00" stroke="#f2f2f2" stroke-width="1.2" />
<line x1="511.50" y1="148.00" x2="511.50" y2="161.50" stroke="#f2f2f2" stroke-width="1.2" />
<text x="509.00" y="163.30" font-size="8.3" fill="#f4f4f4" text-anchor="end" font-weight="normal" textLength="35.0" lengthAdjust="spacingAndGlyphs" >Feedback</text>
<rect x="454.00" y="148.50" width="16.00" height="12.00" fill="url(#hg)" rx="4.6" stroke="#636363" stroke-width="1.3" />
<line x1="461.50" y1="149.80" x2="461.50" y2="159.20" stroke="#d2d2d2" stroke-width="0.9" />
<line x1="462.40" y1="149.80" x2="462.40" y2="159.20" stroke="#808080" stroke-width="0.9" />
<rect x="528.00" y="58.50" width="131.00" height="109.90" fill="#474a56" rx="3.5" />
<text x="592.00" y="68.80" font-size="8.7" fill="#e6e6ea" text-anchor="middle" font-weight="normal" textLength="27.0" lengthAdjust="spacingAndGlyphs" stroke="#e6e6ea" stroke-width="0.25">Output</text>
<polygon points="543.70,79.80 643.50,73.80 643.50,79.80" fill="rgba(255,255,255,0.5)" />
<line x1="539.20" y1="79.80" x2="648.50" y2="79.80" stroke="#f2f2f2" stroke-width="1.9" />
<line x1="543.70" y1="74.30" x2="543.70" y2="85.30" stroke="#f2f2f2" stroke-width="1.2" />
<line x1="643.50" y1="73.30" x2="643.50" y2="86.80" stroke="#f2f2f2" stroke-width="1.2" />
<text x="641.00" y="88.60" font-size="8.3" fill="#f4f4f4" text-anchor="end" font-weight="normal" textLength="28.0" lengthAdjust="spacingAndGlyphs" >Volume</text>
<rect x="616.00" y="73.80" width="16.00" height="12.00" fill="url(#hg)" rx="4.6" stroke="#636363" stroke-width="1.3" />
<line x1="623.50" y1="75.10" x2="623.50" y2="84.50" stroke="#d2d2d2" stroke-width="0.9" />
<line x1="624.40" y1="75.10" x2="624.40" y2="84.50" stroke="#808080" stroke-width="0.9" />
<polygon points="543.70,99.00 543.70,105.00 593.60,99.00" fill="rgba(255,255,255,0.5)" />
<polygon points="593.60,99.00 643.50,93.00 643.50,99.00" fill="rgba(255,255,255,0.5)" />
<line x1="539.20" y1="99.00" x2="648.50" y2="99.00" stroke="#f2f2f2" stroke-width="1.9" />
<line x1="543.70" y1="93.50" x2="543.70" y2="104.50" stroke="#f2f2f2" stroke-width="1.2" />
<line x1="643.50" y1="92.50" x2="643.50" y2="106.00" stroke="#f2f2f2" stroke-width="1.2" />
<text x="641.00" y="107.80" font-size="8.3" fill="#f4f4f4" text-anchor="end" font-weight="normal" textLength="14.0" lengthAdjust="spacingAndGlyphs" >Pan</text>
<rect x="585.60" y="93.00" width="16.00" height="12.00" fill="url(#hg)" rx="4.6" stroke="#636363" stroke-width="1.3" />
<line x1="593.10" y1="94.30" x2="593.10" y2="103.70" stroke="#d2d2d2" stroke-width="0.9" />
<line x1="594.00" y1="94.30" x2="594.00" y2="103.70" stroke="#808080" stroke-width="0.9" />
<polygon points="543.70,117.20 543.70,123.20 593.60,117.20" fill="rgba(255,255,255,0.5)" />
<polygon points="593.60,117.20 643.50,111.20 643.50,117.20" fill="rgba(255,255,255,0.5)" />
<line x1="539.20" y1="117.20" x2="648.50" y2="117.20" stroke="#f2f2f2" stroke-width="1.9" />
<line x1="543.70" y1="111.70" x2="543.70" y2="122.70" stroke="#f2f2f2" stroke-width="1.2" />
<line x1="643.50" y1="110.70" x2="643.50" y2="124.20" stroke="#f2f2f2" stroke-width="1.2" />
<line x1="594.00" y1="115.00" x2="594.00" y2="119.50" stroke="#f2f2f2" stroke-width="1" />
<polygon points="543.70,135.50 643.50,129.50 643.50,135.50" fill="rgba(255,255,255,0.5)" />
<line x1="539.20" y1="135.50" x2="648.50" y2="135.50" stroke="#f2f2f2" stroke-width="1.9" />
<line x1="543.70" y1="130.00" x2="543.70" y2="141.00" stroke="#f2f2f2" stroke-width="1.2" />
<line x1="643.50" y1="129.00" x2="643.50" y2="142.50" stroke="#f2f2f2" stroke-width="1.2" />
<text x="641.00" y="144.30" font-size="8.3" fill="#f4f4f4" text-anchor="end" font-weight="normal" textLength="35.0" lengthAdjust="spacingAndGlyphs" >FX1 Send</text>
<rect x="581.00" y="129.50" width="16.00" height="12.00" fill="url(#hg)" rx="4.6" stroke="#636363" stroke-width="1.3" />
<line x1="588.50" y1="130.80" x2="588.50" y2="140.20" stroke="#d2d2d2" stroke-width="0.9" />
<line x1="589.40" y1="130.80" x2="589.40" y2="140.20" stroke="#808080" stroke-width="0.9" />
<polygon points="543.70,154.50 643.50,148.50 643.50,154.50" fill="rgba(255,255,255,0.5)" />
<line x1="539.20" y1="154.50" x2="648.50" y2="154.50" stroke="#f2f2f2" stroke-width="1.9" />
<line x1="643.50" y1="148.00" x2="643.50" y2="161.50" stroke="#f2f2f2" stroke-width="1.2" />
<text x="641.00" y="163.30" font-size="8.3" fill="#f4f4f4" text-anchor="end" font-weight="normal" textLength="35.0" lengthAdjust="spacingAndGlyphs" >FX2 Send</text>
<rect x="536.50" y="148.50" width="16.00" height="12.00" fill="url(#hg)" rx="4.6" stroke="#636363" stroke-width="1.3" />
<line x1="544.00" y1="149.80" x2="544.00" y2="159.20" stroke="#d2d2d2" stroke-width="0.9" />
<line x1="544.90" y1="149.80" x2="544.90" y2="159.20" stroke="#808080" stroke-width="0.9" />
<rect x="128.00" y="170.00" width="131.00" height="59.50" fill="#474a56" rx="3.5" />
<rect x="128.00" y="170.30" width="131.00" height="16.50" fill="url(#stripg)" rx="2" />
<path d="M128,186.8 H259 V226.5 a3,3 0 0 1 -3,3 H131 a3,3 0 0 1 -3,-3 Z" fill="#cdcfd6"/>
<text x="133.20" y="182.20" font-size="9" fill="#e39a3c" text-anchor="start" font-weight="normal" textLength="25.0" lengthAdjust="spacingAndGlyphs" >Scene</text>
<rect x="189.20" y="174.70" width="10.50" height="9.60" fill="#ff9a1e" />
<text x="183.00" y="181.50" font-size="6" fill="#f0c88e" text-anchor="middle" font-weight="bold" >-3</text>
<text x="205.20" y="181.50" font-size="6" fill="#f0c88e" text-anchor="middle" font-weight="bold" >-1</text>
<text x="217.40" y="181.50" font-size="6" fill="#f0c88e" text-anchor="middle" font-weight="bold" >0</text>
<text x="228.50" y="181.50" font-size="6" fill="#f0c88e" text-anchor="middle" font-weight="bold" >+1</text>
<text x="240.20" y="181.50" font-size="6" fill="#f0c88e" text-anchor="middle" font-weight="bold" >+2</text>
<text x="251.30" y="181.50" font-size="6" fill="#f0c88e" text-anchor="middle" font-weight="bold" >+3</text>
<text x="194.40" y="181.50" font-size="6" fill="#c0401a" text-anchor="middle" font-weight="bold" >-2</text>
<polygon points="144.40,199.50 144.40,202.70 160.10,201.50 160.10,199.50" fill="rgba(0,0,0,0.25)" />
<polygon points="221.70,199.50 221.70,197.90 244.80,196.30 244.80,199.50" fill="rgba(0,0,0,0.25)" />
<line x1="144.90" y1="199.50" x2="144.90" y2="203.30" stroke="#111" stroke-width="1.25" />
<line x1="152.00" y1="199.50" x2="152.00" y2="202.78" stroke="#111" stroke-width="1.25" />
<line x1="159.10" y1="199.50" x2="159.10" y2="202.26" stroke="#111" stroke-width="1.25" />
<line x1="166.20" y1="199.50" x2="166.20" y2="201.74" stroke="#111" stroke-width="1.25" />
<line x1="173.30" y1="199.50" x2="173.30" y2="201.22" stroke="#111" stroke-width="1.25" />
<line x1="180.40" y1="199.50" x2="180.40" y2="200.70" stroke="#111" stroke-width="1.25" />
<line x1="244.30" y1="195.80" x2="244.30" y2="199.50" stroke="#111" stroke-width="1.25" />
<line x1="237.10" y1="196.32" x2="237.10" y2="199.50" stroke="#111" stroke-width="1.25" />
<line x1="229.90" y1="196.84" x2="229.90" y2="199.50" stroke="#111" stroke-width="1.25" />
<line x1="222.70" y1="197.36" x2="222.70" y2="199.50" stroke="#111" stroke-width="1.25" />
<line x1="215.50" y1="197.88" x2="215.50" y2="199.50" stroke="#111" stroke-width="1.25" />
<line x1="208.30" y1="198.40" x2="208.30" y2="199.50" stroke="#111" stroke-width="1.25" />
<line x1="140.00" y1="199.50" x2="249.50" y2="199.50" stroke="#111" stroke-width="1.6" />
<rect x="186.30" y="193.50" width="16.00" height="12.00" fill="url(#hg)" rx="4.6" stroke="#636363" stroke-width="1.3" />
<line x1="193.80" y1="194.80" x2="193.80" y2="204.20" stroke="#d2d2d2" stroke-width="0.9" />
<line x1="194.70" y1="194.80" x2="194.70" y2="204.20" stroke="#808080" stroke-width="0.9" />
<text x="242.00" y="208.30" font-size="8" fill="#222" text-anchor="end" font-weight="normal" >Pitch</text>
<polygon points="140.00,218.40 244.30,212.40 244.30,218.40" fill="rgba(0,0,0,0.30)" />
<line x1="135.50" y1="218.40" x2="249.30" y2="218.40" stroke="#111" stroke-width="1.6" />
<line x1="244.30" y1="211.90" x2="244.30" y2="225.40" stroke="#111" stroke-width="1.2" />
<text x="241.80" y="227.20" font-size="8" fill="#222" text-anchor="end" font-weight="normal" >Portamento</text>
<rect x="136.00" y="212.40" width="16.00" height="12.00" fill="url(#hg)" rx="4.6" stroke="#636363" stroke-width="1.3" />
<line x1="143.50" y1="213.70" x2="143.50" y2="223.10" stroke="#d2d2d2" stroke-width="0.9" />
<line x1="144.40" y1="213.70" x2="144.40" y2="223.10" stroke="#808080" stroke-width="0.9" />
<rect x="261.50" y="170.00" width="397.50" height="59.50" fill="#474a56" rx="3.5" />
<rect x="261.50" y="170.30" width="397.50" height="16.50" fill="url(#stripg)" rx="2" />
<path d="M261.5,186.8 H659 V226.5 a3,3 0 0 1 -3,3 H264.5 a3,3 0 0 1 -3,-3 Z" fill="#cdcfd6"/>
<line x1="393.30" y1="190.00" x2="393.30" y2="225.50" stroke="#a9abb8" stroke-width="1.2" />
<line x1="526.70" y1="190.00" x2="526.70" y2="225.50" stroke="#a9abb8" stroke-width="1.2" />
<rect x="267.00" y="174.60" width="9.90" height="9.80" fill="#ff9a1e" />
<rect x="268.50" y="178.60" width="7.00" height="1.80" fill="#c03a10" />
<path d="M279.6,179.2 H282.4 Q284.8,179.4 285,183.4" stroke="#e8983a" fill="none" stroke-width="1.25" stroke-linecap="round" stroke-linejoin="round"/>
<path d="M290.6,180.2 H294.6 Q297.6,180.4 297.9,183.6" stroke="#e8983a" fill="none" stroke-width="1.25" stroke-linecap="round" stroke-linejoin="round"/>
<path d="M294.6,178.3 L296.6,177.2" stroke="#e8983a" fill="none" stroke-width="1.1" stroke-linecap="round" stroke-linejoin="round"/>
<path d="M299.9,180.2 H303.6 Q306.6,180.4 306.8,183.6" stroke="#e8983a" fill="none" stroke-width="1.25" stroke-linecap="round" stroke-linejoin="round"/>
<path d="M304.6,176.2 V178.6 M303.4,177.4 H305.8" stroke="#e8983a" fill="none" stroke-width="1" stroke-linecap="round" stroke-linejoin="round"/>
<path d="M313.4,183.6 Q313.6,179.6 316.2,179.5 H318.6" stroke="#e8983a" fill="none" stroke-width="1.25" stroke-linecap="round" stroke-linejoin="round"/>
<path d="M322.6,183.6 Q322.8,180.3 325.6,180.2 H329.4" stroke="#e8983a" fill="none" stroke-width="1.25" stroke-linecap="round" stroke-linejoin="round"/>
<path d="M323.2,176.4 L324.6,178.6" stroke="#e8983a" fill="none" stroke-width="1.1" stroke-linecap="round" stroke-linejoin="round"/>
<path d="M331.4,183.6 Q332,179.6 334.7,179.6 Q337.4,179.6 338,183.6" stroke="#e8983a" fill="none" stroke-width="1.25" stroke-linecap="round" stroke-linejoin="round"/>
<path d="M342.4,179.8 Q345.6,180 346.5,183.4 Q347.4,180 350.6,179.8" stroke="#e8983a" fill="none" stroke-width="1.25" stroke-linecap="round" stroke-linejoin="round"/>
<path d="M353.6,179 V183.2 L355.4,180.6 L356.8,183.2 L358.2,180.6 L359.8,183.2 V179" stroke="#e8983a" fill="none" stroke-width="1.3" stroke-linecap="round" stroke-linejoin="round"/>
<path d="M365.4,183.6 L370.6,176.4" stroke="#e8983a" fill="none" stroke-width="1" stroke-linecap="round" stroke-linejoin="round"/>
<text x="364.60" y="180.20" font-size="4.6" fill="#e8983a" text-anchor="start" font-weight="bold" >5</text>
<text x="369.00" y="184.20" font-size="4.6" fill="#e8983a" text-anchor="start" font-weight="bold" >8</text>
<rect x="534.00" y="174.60" width="9.90" height="9.80" fill="#ff9a1e" />
<rect x="535.50" y="178.60" width="7.00" height="1.80" fill="#c03a10" />
<path d="M546.6,179.2 H549.4 Q551.8,179.4 552,183.4" stroke="#e8983a" fill="none" stroke-width="1.25" stroke-linecap="round" stroke-linejoin="round"/>
<path d="M557.6,180.2 H561.6 Q564.6,180.4 564.9,183.6" stroke="#e8983a" fill="none" stroke-width="1.25" stroke-linecap="round" stroke-linejoin="round"/>
<path d="M561.6,178.3 L563.6,177.2" stroke="#e8983a" fill="none" stroke-width="1.1" stroke-linecap="round" stroke-linejoin="round"/>
<path d="M566.9,180.2 H570.6 Q573.6,180.4 573.8,183.6" stroke="#e8983a" fill="none" stroke-width="1.25" stroke-linecap="round" stroke-linejoin="round"/>
<path d="M571.6,176.2 V178.6 M570.4,177.4 H572.8" stroke="#e8983a" fill="none" stroke-width="1" stroke-linecap="round" stroke-linejoin="round"/>
<path d="M580.4,183.6 Q580.6,179.6 583.2,179.5 H585.6" stroke="#e8983a" fill="none" stroke-width="1.25" stroke-linecap="round" stroke-linejoin="round"/>
<path d="M589.6,183.6 Q589.8,180.3 592.6,180.2 H596.4" stroke="#e8983a" fill="none" stroke-width="1.25" stroke-linecap="round" stroke-linejoin="round"/>
<path d="M590.2,176.4 L591.6,178.6" stroke="#e8983a" fill="none" stroke-width="1.1" stroke-linecap="round" stroke-linejoin="round"/>
<path d="M598.4,183.6 Q599,179.6 601.7,179.6 Q604.4,179.6 605,183.6" stroke="#e8983a" fill="none" stroke-width="1.25" stroke-linecap="round" stroke-linejoin="round"/>
<path d="M609.4,179.8 Q612.6,180 613.5,183.4 Q614.4,180 617.6,179.8" stroke="#e8983a" fill="none" stroke-width="1.25" stroke-linecap="round" stroke-linejoin="round"/>
<path d="M620.6,179 V183.2 L622.4,180.6 L623.8,183.2 L625.2,180.6 L626.8,183.2 V179" stroke="#e8983a" fill="none" stroke-width="1.3" stroke-linecap="round" stroke-linejoin="round"/>
<path d="M632.4,183.6 L637.6,176.4" stroke="#e8983a" fill="none" stroke-width="1" stroke-linecap="round" stroke-linejoin="round"/>
<text x="631.60" y="180.20" font-size="4.6" fill="#e8983a" text-anchor="start" font-weight="bold" >5</text>
<text x="636.00" y="184.20" font-size="4.6" fill="#e8983a" text-anchor="start" font-weight="bold" >8</text>
<polygon points="395.80,176.80 395.80,182.20 391.80,179.50" fill="#e8983a" />
<text x="399.10" y="182.20" font-size="8" fill="#e0a050" text-anchor="start" font-weight="bold" textLength="28.0" lengthAdjust="spacingAndGlyphs" >Filter 1</text>
<text x="494.30" y="182.20" font-size="8" fill="#e0a050" text-anchor="start" font-weight="bold" textLength="27.0" lengthAdjust="spacingAndGlyphs" >Filter 2</text>
<polygon points="524.60,176.80 524.60,182.20 528.40,179.50" fill="#e8983a" />
<polygon points="277.20,199.40 376.80,193.40 376.80,199.40" fill="rgba(0,0,0,0.30)" />
<line x1="272.70" y1="199.40" x2="381.80" y2="199.40" stroke="#111" stroke-width="1.6" />
<line x1="277.20" y1="193.90" x2="277.20" y2="204.90" stroke="#111" stroke-width="1.2" />
<line x1="376.80" y1="192.90" x2="376.80" y2="206.40" stroke="#111" stroke-width="1.2" />
<text x="374.30" y="208.20" font-size="8" fill="#222" text-anchor="end" font-weight="normal" >Cutoff</text>
<rect x="318.00" y="193.40" width="16.00" height="12.00" fill="url(#hg)" rx="4.6" stroke="#636363" stroke-width="1.3" />
<line x1="325.50" y1="194.70" x2="325.50" y2="204.10" stroke="#d2d2d2" stroke-width="0.9" />
<line x1="326.40" y1="194.70" x2="326.40" y2="204.10" stroke="#808080" stroke-width="0.9" />
<polygon points="277.20,217.90 376.80,211.90 376.80,217.90" fill="rgba(0,0,0,0.30)" />
<line x1="272.70" y1="217.90" x2="381.80" y2="217.90" stroke="#111" stroke-width="1.6" />
<line x1="376.80" y1="211.40" x2="376.80" y2="224.90" stroke="#111" stroke-width="1.2" />
<text x="374.30" y="226.70" font-size="8" fill="#222" text-anchor="end" font-weight="normal" >Resonance</text>
<rect x="270.00" y="211.90" width="16.00" height="12.00" fill="url(#hg)" rx="4.6" stroke="#636363" stroke-width="1.3" />
<line x1="277.50" y1="213.20" x2="277.50" y2="222.60" stroke="#d2d2d2" stroke-width="0.9" />
<line x1="278.40" y1="213.20" x2="278.40" y2="222.60" stroke="#808080" stroke-width="0.9" />
<polygon points="411.40,209.20 411.40,215.20 461.05,209.20" fill="rgba(0,0,0,0.30)" />
<polygon points="461.05,209.20 510.70,203.20 510.70,209.20" fill="rgba(0,0,0,0.30)" />
<line x1="406.90" y1="209.20" x2="515.70" y2="209.20" stroke="#111" stroke-width="1.6" />
<line x1="411.40" y1="203.70" x2="411.40" y2="214.70" stroke="#111" stroke-width="1.2" />
<line x1="510.70" y1="202.70" x2="510.70" y2="216.20" stroke="#111" stroke-width="1.2" />
<rect x="452.50" y="203.20" width="16.00" height="12.00" fill="url(#hg)" rx="4.6" stroke="#636363" stroke-width="1.3" />
<line x1="460.00" y1="204.50" x2="460.00" y2="213.90" stroke="#d2d2d2" stroke-width="0.9" />
<line x1="460.90" y1="204.50" x2="460.90" y2="213.90" stroke="#808080" stroke-width="0.9" />
<text x="414.00" y="219.50" font-size="7" fill="#222" text-anchor="start" font-weight="normal" >F1</text>
<text x="509.00" y="219.50" font-size="7" fill="#222" text-anchor="end" font-weight="normal" >F2</text>
<polygon points="544.40,199.40 645.50,193.40 645.50,199.40" fill="rgba(0,0,0,0.30)" />
<line x1="539.90" y1="199.40" x2="650.50" y2="199.40" stroke="#111" stroke-width="1.6" />
<line x1="544.40" y1="193.90" x2="544.40" y2="204.90" stroke="#111" stroke-width="1.2" />
<line x1="645.50" y1="192.90" x2="645.50" y2="206.40" stroke="#111" stroke-width="1.2" />
<text x="643.00" y="208.20" font-size="8" fill="#222" text-anchor="end" font-weight="normal" >Cutoff</text>
<rect x="584.40" y="193.40" width="16.00" height="12.00" fill="url(#hg)" rx="4.6" stroke="#636363" stroke-width="1.3" />
<line x1="591.90" y1="194.70" x2="591.90" y2="204.10" stroke="#d2d2d2" stroke-width="0.9" />
<line x1="592.80" y1="194.70" x2="592.80" y2="204.10" stroke="#808080" stroke-width="0.9" />
<polygon points="544.40,217.70 645.50,211.70 645.50,217.70" fill="rgba(0,0,0,0.30)" />
<line x1="539.90" y1="217.70" x2="650.50" y2="217.70" stroke="#111" stroke-width="1.6" />
<line x1="645.50" y1="211.20" x2="645.50" y2="224.70" stroke="#111" stroke-width="1.2" />
<text x="643.00" y="226.50" font-size="8" fill="#222" text-anchor="end" font-weight="normal" >Resonance</text>
<rect x="535.00" y="211.70" width="16.00" height="12.00" fill="url(#hg)" rx="4.6" stroke="#636363" stroke-width="1.3" />
<line x1="542.50" y1="213.00" x2="542.50" y2="222.40" stroke="#d2d2d2" stroke-width="0.9" />
<line x1="543.40" y1="213.00" x2="543.40" y2="222.40" stroke="#808080" stroke-width="0.9" />
<circle cx="651.6" cy="199.5" r="3.6" fill="#e8e8ec" stroke="#555" stroke-width="0.9"/>
<text x="651.60" y="201.40" font-size="5" fill="#333" text-anchor="middle" font-weight="bold" >R</text>
<circle cx="651.6" cy="217.8" r="3.6" fill="#e8e8ec" stroke="#555" stroke-width="0.9"/>
<text x="651.60" y="219.70" font-size="5" fill="#333" text-anchor="middle" font-weight="bold" >L</text>
<rect x="128.00" y="232.20" width="131.20" height="118.40" fill="#474a56" rx="3.5" />
<rect x="135.40" y="237.40" width="12.60" height="6.40" fill="#b2b2b6" />
<text x="141.70" y="242.70" font-size="5.5" fill="#808086" text-anchor="middle" font-weight="bold" >M</text>
<rect x="135.40" y="246.80" width="12.60" height="6.20" fill="#adadb2" />
<text x="141.70" y="252.00" font-size="5.5" fill="#85858a" text-anchor="middle" font-weight="bold" >S</text>
<rect x="136.40" y="255.10" width="9.20" height="6.80" fill="#256432" rx="1.2" />
<rect x="139.20" y="255.90" width="3.60" height="5.20" fill="#46d860" rx="0.8" />
<polygon points="141.00,273.50 147.50,273.50 141.00,323.30" fill="rgba(255,255,255,0.44)" />
<line x1="141.00" y1="270.00" x2="141.00" y2="330.80" stroke="#f2f2f2" stroke-width="2.1" />
<line x1="135.00" y1="273.50" x2="147.00" y2="273.50" stroke="#f2f2f2" stroke-width="1.2" />
<line x1="135.00" y1="323.30" x2="147.00" y2="323.30" stroke="#f2f2f2" stroke-width="1.2" />
<rect x="135.30" y="265.90" width="11.40" height="15.20" fill="url(#vg)" rx="4.2" stroke="#686868" stroke-width="1.2" />
<line x1="137.70" y1="273.50" x2="144.30" y2="273.50" stroke="#727272" stroke-width="1.2" />
<rect x="152.50" y="237.20" width="14.00" height="6.80" fill="#2a5cb8" />
<rect x="153.00" y="237.40" width="13.00" height="3.20" fill="#4484dc" />
<rect x="153.00" y="240.60" width="13.00" height="3.20" fill="#2f6ccc" />
<text x="159.50" y="242.80" font-size="5.8" fill="#eef4ff" text-anchor="middle" font-weight="bold" >M</text>
<rect x="153.20" y="246.80" width="12.60" height="6.20" fill="#adadb2" />
<text x="159.50" y="252.00" font-size="5.5" fill="#85858a" text-anchor="middle" font-weight="bold" >S</text>
<rect x="154.20" y="255.10" width="9.20" height="6.80" fill="#256432" rx="1.2" />
<rect x="157.00" y="255.90" width="3.60" height="5.20" fill="#46d860" rx="0.8" />
<polygon points="158.80,273.50 165.30,273.50 158.80,323.30" fill="rgba(255,255,255,0.44)" />
<line x1="158.80" y1="270.00" x2="158.80" y2="330.80" stroke="#f2f2f2" stroke-width="2.1" />
<line x1="152.80" y1="273.50" x2="164.80" y2="273.50" stroke="#f2f2f2" stroke-width="1.2" />
<line x1="152.80" y1="323.30" x2="164.80" y2="323.30" stroke="#f2f2f2" stroke-width="1.2" />
<rect x="153.10" y="265.90" width="11.40" height="15.20" fill="url(#vg)" rx="4.2" stroke="#686868" stroke-width="1.2" />
<line x1="155.50" y1="273.50" x2="162.10" y2="273.50" stroke="#727272" stroke-width="1.2" />
<rect x="170.30" y="237.20" width="14.00" height="6.80" fill="#2a5cb8" />
<rect x="170.80" y="237.40" width="13.00" height="3.20" fill="#4484dc" />
<rect x="170.80" y="240.60" width="13.00" height="3.20" fill="#2f6ccc" />
<text x="177.30" y="242.80" font-size="5.8" fill="#eef4ff" text-anchor="middle" font-weight="bold" >M</text>
<rect x="171.00" y="246.80" width="12.60" height="6.20" fill="#adadb2" />
<text x="177.30" y="252.00" font-size="5.5" fill="#85858a" text-anchor="middle" font-weight="bold" >S</text>
<rect x="172.00" y="255.10" width="9.20" height="6.80" fill="#256432" rx="1.2" />
<rect x="174.80" y="255.90" width="3.60" height="5.20" fill="#46d860" rx="0.8" />
<polygon points="176.60,273.50 183.10,273.50 176.60,323.30" fill="rgba(255,255,255,0.44)" />
<line x1="176.60" y1="270.00" x2="176.60" y2="330.80" stroke="#f2f2f2" stroke-width="2.1" />
<line x1="170.60" y1="273.50" x2="182.60" y2="273.50" stroke="#f2f2f2" stroke-width="1.2" />
<line x1="170.60" y1="323.30" x2="182.60" y2="323.30" stroke="#f2f2f2" stroke-width="1.2" />
<rect x="170.90" y="265.90" width="11.40" height="15.20" fill="url(#vg)" rx="4.2" stroke="#686868" stroke-width="1.2" />
<line x1="173.30" y1="273.50" x2="179.90" y2="273.50" stroke="#727272" stroke-width="1.2" />
<rect x="187.90" y="237.20" width="14.00" height="6.80" fill="#2a5cb8" />
<rect x="188.40" y="237.40" width="13.00" height="3.20" fill="#4484dc" />
<rect x="188.40" y="240.60" width="13.00" height="3.20" fill="#2f6ccc" />
<text x="194.90" y="242.80" font-size="5.8" fill="#eef4ff" text-anchor="middle" font-weight="bold" >M</text>
<rect x="188.60" y="246.80" width="12.60" height="6.20" fill="#adadb2" />
<text x="194.90" y="252.00" font-size="5.5" fill="#85858a" text-anchor="middle" font-weight="bold" >S</text>
<rect x="189.60" y="255.10" width="9.20" height="6.80" fill="#256432" rx="1.2" />
<rect x="192.40" y="255.90" width="3.60" height="5.20" fill="#46d860" rx="0.8" />
<polygon points="194.20,273.50 200.70,273.50 194.20,323.30" fill="rgba(255,255,255,0.44)" />
<line x1="194.20" y1="270.00" x2="194.20" y2="330.80" stroke="#f2f2f2" stroke-width="2.1" />
<line x1="188.20" y1="273.50" x2="200.20" y2="273.50" stroke="#f2f2f2" stroke-width="1.2" />
<line x1="188.20" y1="323.30" x2="200.20" y2="323.30" stroke="#f2f2f2" stroke-width="1.2" />
<rect x="188.50" y="265.90" width="11.40" height="15.20" fill="url(#vg)" rx="4.2" stroke="#686868" stroke-width="1.2" />
<line x1="190.90" y1="273.50" x2="197.50" y2="273.50" stroke="#727272" stroke-width="1.2" />
<rect x="205.70" y="237.20" width="14.00" height="6.80" fill="#2a5cb8" />
<rect x="206.20" y="237.40" width="13.00" height="3.20" fill="#4484dc" />
<rect x="206.20" y="240.60" width="13.00" height="3.20" fill="#2f6ccc" />
<text x="212.70" y="242.80" font-size="5.8" fill="#eef4ff" text-anchor="middle" font-weight="bold" >M</text>
<rect x="206.40" y="246.80" width="12.60" height="6.20" fill="#adadb2" />
<text x="212.70" y="252.00" font-size="5.5" fill="#85858a" text-anchor="middle" font-weight="bold" >S</text>
<rect x="207.40" y="255.10" width="9.20" height="6.80" fill="#256432" rx="1.2" />
<rect x="210.20" y="255.90" width="3.60" height="5.20" fill="#46d860" rx="0.8" />
<polygon points="212.00,273.50 218.50,273.50 212.00,323.30" fill="rgba(255,255,255,0.44)" />
<line x1="212.00" y1="270.00" x2="212.00" y2="330.80" stroke="#f2f2f2" stroke-width="2.1" />
<line x1="206.00" y1="273.50" x2="218.00" y2="273.50" stroke="#f2f2f2" stroke-width="1.2" />
<line x1="206.00" y1="323.30" x2="218.00" y2="323.30" stroke="#f2f2f2" stroke-width="1.2" />
<rect x="206.30" y="265.90" width="11.40" height="15.20" fill="url(#vg)" rx="4.2" stroke="#686868" stroke-width="1.2" />
<line x1="208.70" y1="273.50" x2="215.30" y2="273.50" stroke="#727272" stroke-width="1.2" />
<rect x="223.60" y="237.20" width="14.00" height="6.80" fill="#2a5cb8" />
<rect x="224.10" y="237.40" width="13.00" height="3.20" fill="#4484dc" />
<rect x="224.10" y="240.60" width="13.00" height="3.20" fill="#2f6ccc" />
<text x="230.60" y="242.80" font-size="5.8" fill="#eef4ff" text-anchor="middle" font-weight="bold" >M</text>
<rect x="224.30" y="246.80" width="12.60" height="6.20" fill="#adadb2" />
<text x="230.60" y="252.00" font-size="5.5" fill="#85858a" text-anchor="middle" font-weight="bold" >S</text>
<rect x="225.30" y="255.10" width="9.20" height="6.80" fill="#256432" rx="1.2" />
<rect x="228.10" y="255.90" width="3.60" height="5.20" fill="#46d860" rx="0.8" />
<polygon points="229.90,273.50 236.40,273.50 229.90,323.30" fill="rgba(255,255,255,0.44)" />
<line x1="229.90" y1="270.00" x2="229.90" y2="330.80" stroke="#f2f2f2" stroke-width="2.1" />
<line x1="223.90" y1="273.50" x2="235.90" y2="273.50" stroke="#f2f2f2" stroke-width="1.2" />
<line x1="223.90" y1="323.30" x2="235.90" y2="323.30" stroke="#f2f2f2" stroke-width="1.2" />
<rect x="224.20" y="265.90" width="11.40" height="15.20" fill="url(#vg)" rx="4.2" stroke="#686868" stroke-width="1.2" />
<line x1="226.60" y1="273.50" x2="233.20" y2="273.50" stroke="#727272" stroke-width="1.2" />
<polygon points="247.20,273.60 253.70,273.60 247.20,298.45" fill="rgba(255,255,255,0.44)" />
<polygon points="247.20,298.45 240.70,323.30 247.20,323.30" fill="rgba(255,255,255,0.44)" />
<line x1="247.20" y1="265.10" x2="247.20" y2="329.80" stroke="#f2f2f2" stroke-width="2.1" />
<line x1="241.20" y1="273.60" x2="253.20" y2="273.60" stroke="#f2f2f2" stroke-width="1.2" />
<line x1="241.20" y1="323.30" x2="253.20" y2="323.30" stroke="#f2f2f2" stroke-width="1.2" />
<rect x="241.50" y="290.40" width="11.40" height="15.20" fill="url(#vg)" rx="4.2" stroke="#686868" stroke-width="1.2" />
<line x1="243.90" y1="298.00" x2="250.50" y2="298.00" stroke="#727272" stroke-width="1.2" />
<text x="141.00" y="340.40" font-size="8.3" fill="#ececf0" text-anchor="middle" font-weight="normal" >1</text>
<text x="158.80" y="340.40" font-size="8.3" fill="#ececf0" text-anchor="middle" font-weight="normal" >2</text>
<text x="176.60" y="340.40" font-size="8.3" fill="#ececf0" text-anchor="middle" font-weight="normal" >3</text>
<text x="194.20" y="340.40" font-size="8.3" fill="#ececf0" text-anchor="middle" font-weight="normal" >1&#215;2</text>
<text x="212.00" y="340.40" font-size="8.3" fill="#ececf0" text-anchor="middle" font-weight="normal" >2&#215;3</text>
<text x="229.90" y="340.40" font-size="8.3" fill="#ececf0" text-anchor="middle" font-weight="normal" >N</text>
<text x="247.60" y="340.40" font-size="8.3" fill="#ececf0" text-anchor="middle" font-weight="normal" textLength="17.0" lengthAdjust="spacingAndGlyphs" >Gain</text>
<rect x="134.00" y="343.00" width="48.00" height="6.00" fill="#b6b7bc" />
<text x="158.00" y="348.00" font-size="5.2" fill="#8c8c92" text-anchor="middle" font-weight="normal" >OSC</text>
<rect x="187.60" y="343.00" width="30.30" height="6.00" fill="#b6b7bc" />
<text x="202.70" y="348.00" font-size="5.2" fill="#8c8c92" text-anchor="middle" font-weight="normal" >RING</text>
<rect x="261.50" y="232.20" width="130.70" height="118.40" fill="#474a56" rx="3.5" />
<rect x="269.40" y="244.40" width="36.40" height="6.60" fill="#ececf0" />
<text x="287.60" y="250.30" font-size="7" fill="#5a5a60" text-anchor="middle" font-weight="normal" textLength="11.0" lengthAdjust="spacingAndGlyphs" >C 3</text>
<text x="287.50" y="261.40" font-size="8.7" fill="#e6e6ea" text-anchor="middle" font-weight="normal" textLength="34.5" lengthAdjust="spacingAndGlyphs" stroke="#e6e6ea" stroke-width="0.25">Keytrack</text>
<polygon points="278.20,273.60 284.70,273.60 278.20,298.45" fill="rgba(255,255,255,0.44)" />
<polygon points="278.20,298.45 271.70,323.30 278.20,323.30" fill="rgba(255,255,255,0.44)" />
<line x1="278.20" y1="265.30" x2="278.20" y2="330.50" stroke="#f2f2f2" stroke-width="2.1" />
<line x1="272.20" y1="273.60" x2="284.20" y2="273.60" stroke="#f2f2f2" stroke-width="1.2" />
<line x1="272.20" y1="323.30" x2="284.20" y2="323.30" stroke="#f2f2f2" stroke-width="1.2" />
<rect x="272.50" y="290.40" width="11.40" height="15.20" fill="url(#vg)" rx="4.2" stroke="#686868" stroke-width="1.2" />
<line x1="274.90" y1="298.00" x2="281.50" y2="298.00" stroke="#727272" stroke-width="1.2" />
<polygon points="296.20,273.60 302.70,273.60 296.20,298.45" fill="rgba(255,255,255,0.44)" />
<polygon points="296.20,298.45 289.70,323.30 296.20,323.30" fill="rgba(255,255,255,0.44)" />
<line x1="296.20" y1="265.30" x2="296.20" y2="330.50" stroke="#f2f2f2" stroke-width="2.1" />
<line x1="290.20" y1="273.60" x2="302.20" y2="273.60" stroke="#f2f2f2" stroke-width="1.2" />
<line x1="290.20" y1="323.30" x2="302.20" y2="323.30" stroke="#f2f2f2" stroke-width="1.2" />
<rect x="290.50" y="290.40" width="11.40" height="15.20" fill="url(#vg)" rx="4.2" stroke="#686868" stroke-width="1.2" />
<line x1="292.90" y1="298.00" x2="299.50" y2="298.00" stroke="#727272" stroke-width="1.2" />
<polygon points="318.00,273.60 324.50,273.60 318.00,323.30" fill="rgba(255,255,255,0.44)" />
<line x1="318.00" y1="265.30" x2="318.00" y2="330.50" stroke="#f2f2f2" stroke-width="2.1" />
<line x1="312.00" y1="273.60" x2="324.00" y2="273.60" stroke="#f2f2f2" stroke-width="1.2" />
<line x1="312.00" y1="323.30" x2="324.00" y2="323.30" stroke="#f2f2f2" stroke-width="1.2" />
<rect x="312.30" y="314.90" width="11.40" height="15.20" fill="url(#vg)" rx="4.2" stroke="#686868" stroke-width="1.2" />
<line x1="314.70" y1="322.50" x2="321.30" y2="322.50" stroke="#727272" stroke-width="1.2" />
<polygon points="269.60,335.80 272.20,337.80 269.60,339.80" fill="#e8e8ec" />
<text x="278.50" y="340.80" font-size="8.3" fill="#ececf0" text-anchor="middle" font-weight="normal" >F1</text>
<polygon points="287.60,335.80 290.20,337.80 287.60,339.80" fill="#e8e8ec" />
<text x="296.70" y="340.80" font-size="8.3" fill="#ececf0" text-anchor="middle" font-weight="normal" >F2</text>
<text x="318.00" y="340.80" font-size="8.3" fill="#ececf0" text-anchor="middle" font-weight="normal" >HP</text>
<rect x="334.20" y="251.60" width="54.60" height="94.00" fill="#6a6d7b" rx="5" />
<text x="361.80" y="259.30" font-size="8.7" fill="#e6e6ea" text-anchor="middle" font-weight="normal" textLength="48.5" lengthAdjust="spacingAndGlyphs" stroke="#e6e6ea" stroke-width="0.25">Waveshaper</text>
<rect x="339.30" y="276.70" width="25.20" height="42.20" fill="#f2f2f4" />
<rect x="339.80" y="277.20" width="24.20" height="6.60" fill="#ff9a1e" />
<text x="352.00" y="282.70" font-size="5.4" fill="#7a4a10" text-anchor="middle" font-weight="bold" >OFF</text>
<text x="352.00" y="289.70" font-size="5.4" fill="#222" text-anchor="middle" font-weight="bold" >SOFT</text>
<text x="352.00" y="296.70" font-size="5.4" fill="#222" text-anchor="middle" font-weight="bold" >HARD</text>
<text x="352.00" y="303.70" font-size="5.4" fill="#222" text-anchor="middle" font-weight="bold" >ASYM</text>
<text x="352.00" y="310.70" font-size="5.4" fill="#222" text-anchor="middle" font-weight="bold" >SINE</text>
<text x="352.00" y="317.70" font-size="5.4" fill="#222" text-anchor="middle" font-weight="bold" >DIGI</text>
<polygon points="376.00,273.60 382.50,273.60 376.00,298.45" fill="rgba(255,255,255,0.44)" />
<polygon points="376.00,298.45 369.50,323.30 376.00,323.30" fill="rgba(255,255,255,0.44)" />
<line x1="376.00" y1="265.30" x2="376.00" y2="330.50" stroke="#f2f2f2" stroke-width="2.1" />
<line x1="370.00" y1="273.60" x2="382.00" y2="273.60" stroke="#f2f2f2" stroke-width="1.2" />
<line x1="370.00" y1="323.30" x2="382.00" y2="323.30" stroke="#f2f2f2" stroke-width="1.2" />
<rect x="370.30" y="290.70" width="11.40" height="15.20" fill="url(#vg)" rx="4.2" stroke="#686868" stroke-width="1.2" />
<line x1="372.70" y1="298.30" x2="379.30" y2="298.30" stroke="#727272" stroke-width="1.2" />
<rect x="371.00" y="333.20" width="10.40" height="9.40" fill="#7a5228" stroke="#e09040" stroke-width="1.1" />
<path d="M373,340.2 H374.6 C376.3,340.2 376,335.2 378,335.2 H379.6" stroke="#fff" fill="none" stroke-width="1.1" />
<rect x="394.50" y="232.20" width="131.30" height="118.40" fill="#474a56" rx="3.5" />
<rect x="402.40" y="237.80" width="71.60" height="14.60" fill="#3b3e49" />
<polygon points="403.40,251.80 420.90,240.00 437.90,246.60 457.40,246.60 472.90,251.80" fill="#d4d4d6" />
<rect x="409.20" y="239.30" width="4.50" height="11.50" fill="rgba(150,105,40,0.5)" />
<rect x="457.70" y="239.30" width="4.50" height="11.50" fill="rgba(150,105,40,0.5)" />
<rect x="484.40" y="237.60" width="31.40" height="14.40" fill="#f2f2f4" stroke="#1a1a1e" stroke-width="0.8" />
<rect x="484.80" y="238.00" width="30.60" height="6.80" fill="#f29a2c" />
<text x="500.10" y="243.50" font-size="5.4" fill="#7a3c08" text-anchor="middle" font-weight="bold" textLength="26.0" lengthAdjust="spacingAndGlyphs" >DIGITAL</text>
<text x="500.10" y="250.60" font-size="5.4" fill="#2a2a30" text-anchor="middle" font-weight="bold" textLength="26.0" lengthAdjust="spacingAndGlyphs" >ANALOG</text>
<line x1="405.00" y1="258.00" x2="438.50" y2="258.00" stroke="#c8c8cc" stroke-width="1" />
<line x1="480.00" y1="258.00" x2="515.50" y2="258.00" stroke="#c8c8cc" stroke-width="1" />
<text x="459.50" y="261.00" font-size="8.5" fill="#e6e6ea" text-anchor="middle" font-weight="normal" textLength="37.0" lengthAdjust="spacingAndGlyphs" stroke="#e6e6ea" stroke-width="0.25">Filter EG</text>
<polygon points="411.40,273.60 417.90,273.60 411.40,323.30" fill="rgba(255,255,255,0.44)" />
<line x1="411.40" y1="265.30" x2="411.40" y2="330.50" stroke="#f2f2f2" stroke-width="2.1" />
<line x1="405.40" y1="273.60" x2="417.40" y2="273.60" stroke="#f2f2f2" stroke-width="1.2" />
<line x1="405.40" y1="323.30" x2="417.40" y2="323.30" stroke="#f2f2f2" stroke-width="1.2" />
<rect x="405.70" y="314.90" width="11.40" height="15.20" fill="url(#vg)" rx="4.2" stroke="#686868" stroke-width="1.2" />
<line x1="408.10" y1="322.50" x2="414.70" y2="322.50" stroke="#727272" stroke-width="1.2" />
<text x="411.40" y="340.80" font-size="8" fill="#ececf0" text-anchor="middle" font-weight="bold" >A</text>
<polygon points="429.00,273.60 435.50,273.60 429.00,323.30" fill="rgba(255,255,255,0.44)" />
<line x1="429.00" y1="265.30" x2="429.00" y2="330.50" stroke="#f2f2f2" stroke-width="2.1" />
<line x1="423.00" y1="273.60" x2="435.00" y2="273.60" stroke="#f2f2f2" stroke-width="1.2" />
<line x1="423.00" y1="323.30" x2="435.00" y2="323.30" stroke="#f2f2f2" stroke-width="1.2" />
<rect x="423.30" y="292.40" width="11.40" height="15.20" fill="url(#vg)" rx="4.2" stroke="#686868" stroke-width="1.2" />
<line x1="425.70" y1="300.00" x2="432.30" y2="300.00" stroke="#727272" stroke-width="1.2" />
<text x="429.00" y="340.80" font-size="8" fill="#ececf0" text-anchor="middle" font-weight="bold" >D</text>
<polygon points="446.30,273.60 452.80,273.60 446.30,323.30" fill="rgba(255,255,255,0.44)" />
<line x1="446.30" y1="265.30" x2="446.30" y2="330.50" stroke="#f2f2f2" stroke-width="2.1" />
<line x1="440.30" y1="273.60" x2="452.30" y2="273.60" stroke="#f2f2f2" stroke-width="1.2" />
<line x1="440.30" y1="323.30" x2="452.30" y2="323.30" stroke="#f2f2f2" stroke-width="1.2" />
<rect x="440.60" y="314.90" width="11.40" height="15.20" fill="url(#vg)" rx="4.2" stroke="#686868" stroke-width="1.2" />
<line x1="443.00" y1="322.50" x2="449.60" y2="322.50" stroke="#727272" stroke-width="1.2" />
<text x="446.30" y="340.80" font-size="8" fill="#ececf0" text-anchor="middle" font-weight="bold" >S</text>
<polygon points="464.20,273.60 470.70,273.60 464.20,323.30" fill="rgba(255,255,255,0.44)" />
<line x1="464.20" y1="265.30" x2="464.20" y2="330.50" stroke="#f2f2f2" stroke-width="2.1" />
<line x1="458.20" y1="273.60" x2="470.20" y2="273.60" stroke="#f2f2f2" stroke-width="1.2" />
<line x1="458.20" y1="323.30" x2="470.20" y2="323.30" stroke="#f2f2f2" stroke-width="1.2" />
<rect x="458.50" y="292.40" width="11.40" height="15.20" fill="url(#vg)" rx="4.2" stroke="#686868" stroke-width="1.2" />
<line x1="460.90" y1="300.00" x2="467.50" y2="300.00" stroke="#727272" stroke-width="1.2" />
<text x="464.20" y="340.80" font-size="8" fill="#ececf0" text-anchor="middle" font-weight="bold" >R</text>
<polygon points="491.30,273.60 497.80,273.60 491.30,298.45" fill="rgba(255,255,255,0.44)" />
<polygon points="491.30,298.45 484.80,323.30 491.30,323.30" fill="rgba(255,255,255,0.44)" />
<line x1="491.30" y1="265.30" x2="491.30" y2="330.50" stroke="#f2f2f2" stroke-width="2.1" />
<line x1="485.30" y1="273.60" x2="497.30" y2="273.60" stroke="#f2f2f2" stroke-width="1.2" />
<line x1="485.30" y1="323.30" x2="497.30" y2="323.30" stroke="#f2f2f2" stroke-width="1.2" />
<rect x="485.60" y="290.40" width="11.40" height="15.20" fill="url(#vg)" rx="4.2" stroke="#686868" stroke-width="1.2" />
<line x1="488.00" y1="298.00" x2="494.60" y2="298.00" stroke="#727272" stroke-width="1.2" />
<polygon points="509.30,273.60 515.80,273.60 509.30,298.45" fill="rgba(255,255,255,0.44)" />
<polygon points="509.30,298.45 502.80,323.30 509.30,323.30" fill="rgba(255,255,255,0.44)" />
<line x1="509.30" y1="265.30" x2="509.30" y2="330.50" stroke="#f2f2f2" stroke-width="2.1" />
<line x1="503.30" y1="273.60" x2="515.30" y2="273.60" stroke="#f2f2f2" stroke-width="1.2" />
<line x1="503.30" y1="323.30" x2="515.30" y2="323.30" stroke="#f2f2f2" stroke-width="1.2" />
<rect x="503.60" y="290.40" width="11.40" height="15.20" fill="url(#vg)" rx="4.2" stroke="#686868" stroke-width="1.2" />
<line x1="506.00" y1="298.00" x2="512.60" y2="298.00" stroke="#727272" stroke-width="1.2" />
<polygon points="482.30,335.80 484.90,337.80 482.30,339.80" fill="#e8e8ec" />
<text x="491.50" y="340.80" font-size="8.3" fill="#ececf0" text-anchor="middle" font-weight="normal" >F1</text>
<polygon points="500.30,335.80 502.90,337.80 500.30,339.80" fill="#e8e8ec" />
<text x="509.70" y="340.80" font-size="8.3" fill="#ececf0" text-anchor="middle" font-weight="normal" >F2</text>
<rect x="528.00" y="232.20" width="131.00" height="118.40" fill="#474a56" rx="3.5" />
<rect x="535.20" y="237.80" width="71.60" height="14.60" fill="#3b3e49" />
<polygon points="536.20,251.80 553.40,240.00 569.00,243.60 589.60,243.60 602.50,251.80" fill="#d4d4d6" />
<rect x="541.20" y="239.30" width="4.50" height="11.50" fill="rgba(150,105,40,0.5)" />
<rect x="598.80" y="239.30" width="4.50" height="11.50" fill="rgba(150,105,40,0.5)" />
<rect x="617.60" y="237.60" width="31.40" height="14.40" fill="#f2f2f4" stroke="#1a1a1e" stroke-width="0.8" />
<rect x="618.00" y="238.00" width="30.60" height="6.80" fill="#f29a2c" />
<text x="633.30" y="243.50" font-size="5.4" fill="#7a3c08" text-anchor="middle" font-weight="bold" textLength="26.0" lengthAdjust="spacingAndGlyphs" >DIGITAL</text>
<text x="633.30" y="250.60" font-size="5.4" fill="#2a2a30" text-anchor="middle" font-weight="bold" textLength="26.0" lengthAdjust="spacingAndGlyphs" >ANALOG</text>
<line x1="538.00" y1="258.00" x2="552.00" y2="258.00" stroke="#c8c8cc" stroke-width="1" />
<line x1="592.70" y1="258.00" x2="603.80" y2="258.00" stroke="#c8c8cc" stroke-width="1" />
<text x="572.40" y="261.00" font-size="8.5" fill="#e6e6ea" text-anchor="middle" font-weight="normal" textLength="32.8" lengthAdjust="spacingAndGlyphs" stroke="#e6e6ea" stroke-width="0.25">Amp EG</text>
<line x1="618.00" y1="258.00" x2="622.50" y2="258.00" stroke="#c8c8cc" stroke-width="1" />
<line x1="644.40" y1="258.00" x2="649.00" y2="258.00" stroke="#c8c8cc" stroke-width="1" />
<text x="633.20" y="261.00" font-size="8.5" fill="#e6e6ea" text-anchor="middle" font-weight="normal" textLength="17.3" lengthAdjust="spacingAndGlyphs" stroke="#e6e6ea" stroke-width="0.25">Amp</text>
<polygon points="543.70,273.60 550.20,273.60 543.70,323.30" fill="rgba(255,255,255,0.44)" />
<line x1="543.70" y1="265.30" x2="543.70" y2="330.50" stroke="#f2f2f2" stroke-width="2.1" />
<line x1="537.70" y1="273.60" x2="549.70" y2="273.60" stroke="#f2f2f2" stroke-width="1.2" />
<line x1="537.70" y1="323.30" x2="549.70" y2="323.30" stroke="#f2f2f2" stroke-width="1.2" />
<rect x="538.00" y="314.90" width="11.40" height="15.20" fill="url(#vg)" rx="4.2" stroke="#686868" stroke-width="1.2" />
<line x1="540.40" y1="322.50" x2="547.00" y2="322.50" stroke="#727272" stroke-width="1.2" />
<text x="543.70" y="340.80" font-size="8" fill="#ececf0" text-anchor="middle" font-weight="bold" >A</text>
<polygon points="562.40,273.60 568.90,273.60 562.40,323.30" fill="rgba(255,255,255,0.44)" />
<line x1="562.40" y1="265.30" x2="562.40" y2="330.50" stroke="#f2f2f2" stroke-width="2.1" />
<line x1="556.40" y1="273.60" x2="568.40" y2="273.60" stroke="#f2f2f2" stroke-width="1.2" />
<line x1="556.40" y1="323.30" x2="568.40" y2="323.30" stroke="#f2f2f2" stroke-width="1.2" />
<rect x="556.70" y="284.90" width="11.40" height="15.20" fill="url(#vg)" rx="4.2" stroke="#686868" stroke-width="1.2" />
<line x1="559.10" y1="292.50" x2="565.70" y2="292.50" stroke="#727272" stroke-width="1.2" />
<text x="562.40" y="340.80" font-size="8" fill="#ececf0" text-anchor="middle" font-weight="bold" >D</text>
<polygon points="580.40,273.60 586.90,273.60 580.40,323.30" fill="rgba(255,255,255,0.44)" />
<line x1="580.40" y1="265.30" x2="580.40" y2="330.50" stroke="#f2f2f2" stroke-width="2.1" />
<line x1="574.40" y1="273.60" x2="586.40" y2="273.60" stroke="#f2f2f2" stroke-width="1.2" />
<line x1="574.40" y1="323.30" x2="586.40" y2="323.30" stroke="#f2f2f2" stroke-width="1.2" />
<rect x="574.70" y="265.70" width="11.40" height="15.20" fill="url(#vg)" rx="4.2" stroke="#686868" stroke-width="1.2" />
<line x1="577.10" y1="273.30" x2="583.70" y2="273.30" stroke="#727272" stroke-width="1.2" />
<text x="580.40" y="340.80" font-size="8" fill="#ececf0" text-anchor="middle" font-weight="bold" >S</text>
<polygon points="598.00,273.60 604.50,273.60 598.00,323.30" fill="rgba(255,255,255,0.44)" />
<line x1="598.00" y1="265.30" x2="598.00" y2="330.50" stroke="#f2f2f2" stroke-width="2.1" />
<line x1="592.00" y1="273.60" x2="604.00" y2="273.60" stroke="#f2f2f2" stroke-width="1.2" />
<line x1="592.00" y1="323.30" x2="604.00" y2="323.30" stroke="#f2f2f2" stroke-width="1.2" />
<rect x="592.30" y="303.40" width="11.40" height="15.20" fill="url(#vg)" rx="4.2" stroke="#686868" stroke-width="1.2" />
<line x1="594.70" y1="311.00" x2="601.30" y2="311.00" stroke="#727272" stroke-width="1.2" />
<text x="598.00" y="340.80" font-size="8" fill="#ececf0" text-anchor="middle" font-weight="bold" >R</text>
<polygon points="624.30,273.60 630.80,273.60 624.30,298.45" fill="rgba(255,255,255,0.44)" />
<polygon points="624.30,298.45 617.80,323.30 624.30,323.30" fill="rgba(255,255,255,0.44)" />
<line x1="624.30" y1="265.30" x2="624.30" y2="330.50" stroke="#f2f2f2" stroke-width="2.1" />
<line x1="618.30" y1="273.60" x2="630.30" y2="273.60" stroke="#f2f2f2" stroke-width="1.2" />
<line x1="618.30" y1="323.30" x2="630.30" y2="323.30" stroke="#f2f2f2" stroke-width="1.2" />
<rect x="618.60" y="289.90" width="11.40" height="15.20" fill="url(#vg)" rx="4.2" stroke="#686868" stroke-width="1.2" />
<line x1="621.00" y1="297.50" x2="627.60" y2="297.50" stroke="#727272" stroke-width="1.2" />
<line x1="641.90" y1="265.30" x2="641.90" y2="330.50" stroke="#f2f2f2" stroke-width="2.1" />
<line x1="635.90" y1="273.60" x2="647.90" y2="273.60" stroke="#f2f2f2" stroke-width="1.2" />
<line x1="635.90" y1="323.30" x2="647.90" y2="323.30" stroke="#f2f2f2" stroke-width="1.2" />
<rect x="636.20" y="265.40" width="11.40" height="15.20" fill="url(#vg)" rx="4.2" stroke="#686868" stroke-width="1.2" />
<line x1="638.60" y1="273.00" x2="645.20" y2="273.00" stroke="#727272" stroke-width="1.2" />
<text x="624.30" y="340.80" font-size="8" fill="#ececf0" text-anchor="middle" font-weight="bold" textLength="18.0" lengthAdjust="spacingAndGlyphs" >Gain</text>
<text x="643.30" y="340.80" font-size="8" fill="#ececf0" text-anchor="middle" font-weight="bold" textLength="12.0" lengthAdjust="spacingAndGlyphs" >Vel</text>
<rect x="0.00" y="351.60" width="660.00" height="44.60" fill="#11326e" />
<rect x="0.00" y="396.00" width="660.00" height="1.80" fill="#0c1830" />
<rect x="-1.50" y="354.30" width="55.80" height="11.90" fill="#153b7e" rx="1.2" stroke="#244f9e" stroke-width="1.0" />
<text x="27.75" y="362.90" font-size="7" fill="#2c5cae" text-anchor="middle" font-weight="normal" >Velocity</text>
<rect x="56.00" y="354.30" width="53.80" height="11.90" fill="#153b7e" rx="1.2" stroke="#244f9e" stroke-width="1.0" />
<text x="83.25" y="362.90" font-size="7" fill="#2c5cae" text-anchor="middle" font-weight="normal" >Keytrack</text>
<rect x="111.50" y="354.30" width="53.80" height="11.90" fill="#153b7e" rx="1.2" stroke="#244f9e" stroke-width="1.0" />
<text x="138.75" y="362.90" font-size="7" fill="#2c5cae" text-anchor="middle" font-weight="normal" >Poly AT</text>
<rect x="167.00" y="354.30" width="53.80" height="11.90" fill="#153b7e" rx="1.2" stroke="#244f9e" stroke-width="1.0" />
<text x="194.25" y="362.90" font-size="7" fill="#2c5cae" text-anchor="middle" font-weight="normal" >Channel AT</text>
<rect x="222.50" y="354.30" width="53.80" height="11.90" fill="#153b7e" rx="1.2" stroke="#244f9e" stroke-width="1.0" />
<text x="249.75" y="362.90" font-size="7" fill="#2c5cae" text-anchor="middle" font-weight="normal" >Pitchbend</text>
<rect x="278.00" y="354.30" width="53.80" height="11.90" fill="#153b7e" rx="1.2" stroke="#4a84e0" stroke-width="1.2" />
<rect x="279.50" y="355.80" width="50.80" height="8.90" fill="none" rx="1" stroke="#2c5cb4" stroke-width="0.8" />
<text x="305.25" y="362.90" font-size="7.5" fill="#6aa4fa" text-anchor="middle" font-weight="bold" >Modwheel</text>
<rect x="333.50" y="354.30" width="53.80" height="11.90" fill="#153b7e" rx="1.2" stroke="#244f9e" stroke-width="1.0" />
<text x="360.75" y="362.90" font-size="7" fill="#2c5cae" text-anchor="middle" font-weight="normal" >Timbre</text>
<rect x="-1.50" y="369.00" width="55.80" height="12.00" fill="#153b7e" rx="1.2" stroke="#244f9e" stroke-width="1.0" />
<text x="26.25" y="377.70" font-size="7" fill="#2c5cae" text-anchor="middle" font-weight="normal" >LFO 1</text>
<path d="M48.5,372.2 V377.2 M46.7,375.6 L48.5,377.8 L50.3,375.6" stroke="#7aa4e6" fill="none" stroke-width="1.1" />
<rect x="56.00" y="369.00" width="53.80" height="12.00" fill="#153b7e" rx="1.2" stroke="#244f9e" stroke-width="1.0" />
<text x="81.75" y="377.70" font-size="7" fill="#2c5cae" text-anchor="middle" font-weight="normal" >LFO 2</text>
<path d="M104.0,372.2 V377.2 M102.2,375.6 L104.0,377.8 L105.8,375.6" stroke="#7aa4e6" fill="none" stroke-width="1.1" />
<rect x="111.50" y="369.00" width="53.80" height="12.00" fill="#153b7e" rx="1.2" stroke="#244f9e" stroke-width="1.0" />
<text x="137.25" y="377.70" font-size="7" fill="#2c5cae" text-anchor="middle" font-weight="normal" >LFO 3</text>
<path d="M159.5,372.2 V377.2 M157.7,375.6 L159.5,377.8 L161.3,375.6" stroke="#7aa4e6" fill="none" stroke-width="1.1" />
<rect x="167.00" y="369.00" width="53.80" height="12.00" fill="#2f86ff" rx="1.2" stroke="#4a96ff" stroke-width="1.0" />
<text x="192.75" y="377.70" font-size="7" fill="#163a7c" text-anchor="middle" font-weight="normal" >LFO 4</text>
<path d="M215.0,372.2 V377.2 M213.2,375.6 L215.0,377.8 L216.8,375.6" stroke="#ffc040" fill="none" stroke-width="1.1" />
<circle cx="215.0" cy="375.3" r="2" fill="#c89020"/>
<rect x="222.50" y="369.00" width="53.80" height="12.00" fill="#153b7e" rx="1.2" stroke="#244f9e" stroke-width="1.0" />
<text x="248.25" y="377.70" font-size="7" fill="#2c5cae" text-anchor="middle" font-weight="normal" >LFO 5</text>
<path d="M270.5,372.2 V377.2 M268.7,375.6 L270.5,377.8 L272.3,375.6" stroke="#7aa4e6" fill="none" stroke-width="1.1" />
<rect x="278.00" y="369.00" width="53.80" height="12.00" fill="#153b7e" rx="1.2" stroke="#244f9e" stroke-width="1.0" />
<text x="303.75" y="377.70" font-size="7" fill="#2c5cae" text-anchor="middle" font-weight="normal" >LFO 6</text>
<path d="M326.0,372.2 V377.2 M324.2,375.6 L326.0,377.8 L327.8,375.6" stroke="#7aa4e6" fill="none" stroke-width="1.1" />
<rect x="333.50" y="369.00" width="53.80" height="12.00" fill="#153b7e" rx="1.2" stroke="#244f9e" stroke-width="1.0" />
<text x="360.75" y="377.70" font-size="7" fill="#2c5cae" text-anchor="middle" font-weight="normal" >Amp EG</text>
<rect x="-1.50" y="383.80" width="55.80" height="11.20" fill="#153b7e" rx="1.2" stroke="#244f9e" stroke-width="1.0" />
<text x="26.25" y="391.70" font-size="7" fill="#2c5cae" text-anchor="middle" font-weight="normal" >SLFO 1</text>
<path d="M48.5,386.59999999999997 V391.59999999999997 M46.7,390.0 L48.5,392.2 L50.3,390.0" stroke="#7aa4e6" fill="none" stroke-width="1.1" />
<rect x="56.00" y="383.80" width="53.80" height="11.20" fill="#153b7e" rx="1.2" stroke="#244f9e" stroke-width="1.0" />
<text x="81.75" y="391.70" font-size="7" fill="#2c5cae" text-anchor="middle" font-weight="normal" >SLFO 2</text>
<path d="M104.0,386.59999999999997 V391.59999999999997 M102.2,390.0 L104.0,392.2 L105.8,390.0" stroke="#7aa4e6" fill="none" stroke-width="1.1" />
<rect x="111.50" y="383.80" width="53.80" height="11.20" fill="#153b7e" rx="1.2" stroke="#244f9e" stroke-width="1.0" />
<text x="137.25" y="391.70" font-size="7" fill="#2c5cae" text-anchor="middle" font-weight="normal" >SLFO 3</text>
<path d="M159.5,386.59999999999997 V391.59999999999997 M157.7,390.0 L159.5,392.2 L161.3,390.0" stroke="#7aa4e6" fill="none" stroke-width="1.1" />
<rect x="167.00" y="383.80" width="53.80" height="11.20" fill="#153b7e" rx="1.2" stroke="#244f9e" stroke-width="1.0" />
<text x="192.75" y="391.70" font-size="7" fill="#2c5cae" text-anchor="middle" font-weight="normal" >SLFO 4</text>
<path d="M215.0,386.59999999999997 V391.59999999999997 M213.2,390.0 L215.0,392.2 L216.8,390.0" stroke="#7aa4e6" fill="none" stroke-width="1.1" />
<rect x="222.50" y="383.80" width="53.80" height="11.20" fill="#153b7e" rx="1.2" stroke="#244f9e" stroke-width="1.0" />
<text x="248.25" y="391.70" font-size="7" fill="#2c5cae" text-anchor="middle" font-weight="normal" >SLFO 5</text>
<path d="M270.5,386.59999999999997 V391.59999999999997 M268.7,390.0 L270.5,392.2 L272.3,390.0" stroke="#7aa4e6" fill="none" stroke-width="1.1" />
<rect x="278.00" y="383.80" width="53.80" height="11.20" fill="#153b7e" rx="1.2" stroke="#244f9e" stroke-width="1.0" />
<text x="303.75" y="391.70" font-size="7" fill="#2c5cae" text-anchor="middle" font-weight="normal" >SLFO 6</text>
<path d="M326.0,386.59999999999997 V391.59999999999997 M324.2,390.0 L326.0,392.2 L327.8,390.0" stroke="#7aa4e6" fill="none" stroke-width="1.1" />
<rect x="333.50" y="383.80" width="53.80" height="11.20" fill="#153b7e" rx="1.2" stroke="#244f9e" stroke-width="1.0" />
<text x="360.75" y="391.70" font-size="7" fill="#2c5cae" text-anchor="middle" font-weight="normal" >Filter EG</text>
<rect x="395.00" y="354.60" width="64.30" height="18.60" fill="#153a7c" rx="1.2" stroke="#244f9e" stroke-width="1.1" />
<rect x="396.60" y="367.20" width="61.00" height="4.60" fill="#2760c0" rx="0.8" />
<text x="427.00" y="362.10" font-size="5" fill="#3a70c8" text-anchor="middle" font-weight="normal" >-</text>
<rect x="461.50" y="354.60" width="64.30" height="18.60" fill="#153a7c" rx="1.2" stroke="#244f9e" stroke-width="1.1" />
<rect x="463.10" y="367.20" width="61.00" height="4.60" fill="#2760c0" rx="0.8" />
<text x="493.50" y="362.10" font-size="5" fill="#3a70c8" text-anchor="middle" font-weight="normal" >-</text>
<rect x="528.00" y="354.60" width="64.30" height="18.60" fill="#153a7c" rx="1.2" stroke="#244f9e" stroke-width="1.1" />
<rect x="529.60" y="367.20" width="61.00" height="4.60" fill="#2760c0" rx="0.8" />
<text x="560.00" y="362.10" font-size="5" fill="#3a70c8" text-anchor="middle" font-weight="normal" >-</text>
<rect x="594.20" y="354.60" width="64.30" height="18.60" fill="#153a7c" rx="1.2" stroke="#244f9e" stroke-width="1.1" />
<rect x="595.80" y="367.20" width="61.00" height="4.60" fill="#2760c0" rx="0.8" />
<text x="626.20" y="362.10" font-size="5" fill="#3a70c8" text-anchor="middle" font-weight="normal" >-</text>
<rect x="395.00" y="376.20" width="64.30" height="18.80" fill="#153a7c" rx="1.2" stroke="#244f9e" stroke-width="1.1" />
<rect x="396.60" y="389.00" width="61.00" height="4.60" fill="#2760c0" rx="0.8" />
<text x="427.00" y="383.70" font-size="5" fill="#3a70c8" text-anchor="middle" font-weight="normal" >-</text>
<rect x="461.50" y="376.20" width="64.30" height="18.80" fill="#153a7c" rx="1.2" stroke="#244f9e" stroke-width="1.1" />
<rect x="463.10" y="389.00" width="61.00" height="4.60" fill="#2760c0" rx="0.8" />
<text x="493.50" y="383.70" font-size="5" fill="#3a70c8" text-anchor="middle" font-weight="normal" >-</text>
<rect x="528.00" y="376.20" width="64.30" height="18.80" fill="#153a7c" rx="1.2" stroke="#244f9e" stroke-width="1.1" />
<rect x="529.60" y="389.00" width="61.00" height="4.60" fill="#2760c0" rx="0.8" />
<text x="560.00" y="383.70" font-size="5" fill="#3a70c8" text-anchor="middle" font-weight="normal" >-</text>
<rect x="594.20" y="376.20" width="64.30" height="18.80" fill="#153a7c" rx="1.2" stroke="#244f9e" stroke-width="1.1" />
<rect x="595.80" y="389.00" width="61.00" height="4.60" fill="#2760c0" rx="0.8" />
<text x="626.20" y="383.70" font-size="5" fill="#3a70c8" text-anchor="middle" font-weight="normal" >-</text>
<rect x="0.00" y="397.00" width="667.00" height="83.00" fill="#ff9412" />
<line x1="660.30" y1="397.00" x2="660.30" y2="480.00" stroke="#2a1a08" stroke-width="1" />
<line x1="0.00" y1="397.30" x2="660.00" y2="397.30" stroke="#1a1206" stroke-width="1" />
<polygon points="10.60,410.90 110.00,404.90 110.00,410.90" fill="rgba(205,205,215,0.66)" />
<line x1="6.10" y1="410.90" x2="115.00" y2="410.90" stroke="#2e1606" stroke-width="1.9" />
<line x1="10.60" y1="405.40" x2="10.60" y2="416.40" stroke="#2e1606" stroke-width="1.2" />
<line x1="110.00" y1="404.40" x2="110.00" y2="417.90" stroke="#2e1606" stroke-width="1.2" />
<text x="107.50" y="419.90" font-size="8" fill="#5a2a08" text-anchor="end" font-weight="normal" textLength="16.0" lengthAdjust="spacingAndGlyphs" >Rate</text>
<rect x="46.90" y="404.90" width="16.00" height="12.00" fill="url(#hg)" rx="4.6" stroke="#636363" stroke-width="1.3" />
<line x1="54.40" y1="406.20" x2="54.40" y2="415.60" stroke="#d2d2d2" stroke-width="0.9" />
<line x1="55.30" y1="406.20" x2="55.30" y2="415.60" stroke="#808080" stroke-width="0.9" />
<polygon points="10.60,429.70 110.00,423.70 110.00,429.70" fill="rgba(205,205,215,0.66)" />
<line x1="6.10" y1="429.70" x2="115.00" y2="429.70" stroke="#2e1606" stroke-width="1.9" />
<line x1="110.00" y1="423.20" x2="110.00" y2="436.70" stroke="#2e1606" stroke-width="1.2" />
<text x="107.50" y="438.70" font-size="8" fill="#5a2a08" text-anchor="end" font-weight="normal" textLength="53.0" lengthAdjust="spacingAndGlyphs" >Phase / Shuffle</text>
<rect x="3.50" y="423.70" width="16.00" height="12.00" fill="url(#hg)" rx="4.6" stroke="#636363" stroke-width="1.3" />
<line x1="11.00" y1="425.00" x2="11.00" y2="434.40" stroke="#d2d2d2" stroke-width="0.9" />
<line x1="11.90" y1="425.00" x2="11.90" y2="434.40" stroke="#808080" stroke-width="0.9" />
<polygon points="10.60,448.10 10.60,454.10 60.30,448.10" fill="rgba(205,205,215,0.66)" />
<polygon points="60.30,448.10 110.00,442.10 110.00,448.10" fill="rgba(205,205,215,0.66)" />
<line x1="6.10" y1="448.10" x2="115.00" y2="448.10" stroke="#2e1606" stroke-width="1.9" />
<line x1="10.60" y1="442.60" x2="10.60" y2="453.60" stroke="#2e1606" stroke-width="1.2" />
<line x1="110.00" y1="441.60" x2="110.00" y2="455.10" stroke="#2e1606" stroke-width="1.2" />
<text x="107.50" y="457.10" font-size="8" fill="#5a2a08" text-anchor="end" font-weight="normal" textLength="37.5" lengthAdjust="spacingAndGlyphs" >Magnitude</text>
<rect x="103.30" y="442.10" width="16.00" height="12.00" fill="url(#hg)" rx="4.6" stroke="#636363" stroke-width="1.3" />
<line x1="110.80" y1="443.40" x2="110.80" y2="452.80" stroke="#d2d2d2" stroke-width="0.9" />
<line x1="111.70" y1="443.40" x2="111.70" y2="452.80" stroke="#808080" stroke-width="0.9" />
<polygon points="10.60,466.90 10.60,472.90 60.30,466.90" fill="rgba(205,205,215,0.66)" />
<polygon points="60.30,466.90 110.00,460.90 110.00,466.90" fill="rgba(205,205,215,0.66)" />
<line x1="6.10" y1="466.90" x2="115.00" y2="466.90" stroke="#2e1606" stroke-width="1.9" />
<line x1="10.60" y1="461.40" x2="10.60" y2="472.40" stroke="#2e1606" stroke-width="1.2" />
<line x1="110.00" y1="460.40" x2="110.00" y2="473.90" stroke="#2e1606" stroke-width="1.2" />
<text x="107.50" y="475.90" font-size="8" fill="#5a2a08" text-anchor="end" font-weight="normal" textLength="26.5" lengthAdjust="spacingAndGlyphs" >Deform</text>
<rect x="52.90" y="460.90" width="16.00" height="12.00" fill="url(#hg)" rx="4.6" stroke="#636363" stroke-width="1.3" />
<line x1="60.40" y1="462.20" x2="60.40" y2="471.60" stroke="#d2d2d2" stroke-width="0.9" />
<line x1="61.30" y1="462.20" x2="61.30" y2="471.60" stroke="#808080" stroke-width="0.9" />
<rect x="139.20" y="407.60" width="42.00" height="31.80" fill="#e9e9ed" rx="3.5" stroke="#c08a48" stroke-width="0.8" />
<rect x="139.60" y="418.80" width="41.20" height="10.40" fill="#ff9a1e" />
<text x="160.20" y="416.00" font-size="7.8" fill="#4a2a10" text-anchor="middle" font-weight="normal" textLength="28.0" lengthAdjust="spacingAndGlyphs" >Freerun</text>
<text x="160.20" y="426.70" font-size="7.8" fill="#6a3408" text-anchor="middle" font-weight="normal" textLength="37.0" lengthAdjust="spacingAndGlyphs" >Keytrigger</text>
<text x="160.20" y="437.50" font-size="7.8" fill="#4a2a10" text-anchor="middle" font-weight="normal" textLength="29.0" lengthAdjust="spacingAndGlyphs" >Random</text>
<rect x="139.20" y="446.60" width="42.00" height="10.60" fill="#e9e9ed" rx="3.5" stroke="#c08a48" stroke-width="0.8" />
<text x="160.20" y="454.90" font-size="7.8" fill="#4a2a10" text-anchor="middle" font-weight="normal" textLength="31.0" lengthAdjust="spacingAndGlyphs" >Unipolar</text>
<rect x="206.40" y="403.90" width="43.80" height="71.90" fill="#f1f1f4" rx="3" stroke="#f6d6a8" stroke-width="1" />
<rect x="207.60" y="405.30" width="41.40" height="7.40" fill="#ff9a1e" rx="1" />
<text x="228.30" y="411.30" font-size="6.6" fill="#7a3a08" text-anchor="middle" font-weight="bold" textLength="11.5" lengthAdjust="spacingAndGlyphs" >Sine</text>
<line x1="207.20" y1="413.43" x2="249.40" y2="413.43" stroke="#b4b8c8" stroke-width="0.8" />
<text x="228.30" y="420.23" font-size="6.6" fill="#4a4a52" text-anchor="middle" font-weight="bold" textLength="24.5" lengthAdjust="spacingAndGlyphs" >Triangle</text>
<line x1="207.20" y1="422.36" x2="249.40" y2="422.36" stroke="#b4b8c8" stroke-width="0.8" />
<text x="228.30" y="429.16" font-size="6.6" fill="#4a4a52" text-anchor="middle" font-weight="bold" textLength="21.5" lengthAdjust="spacingAndGlyphs" >Square</text>
<line x1="207.20" y1="431.29" x2="249.40" y2="431.29" stroke="#b4b8c8" stroke-width="0.8" />
<text x="228.30" y="438.09" font-size="6.6" fill="#4a4a52" text-anchor="middle" font-weight="bold" textLength="16.0" lengthAdjust="spacingAndGlyphs" >Ramp</text>
<line x1="207.20" y1="440.22" x2="249.40" y2="440.22" stroke="#b4b8c8" stroke-width="0.8" />
<text x="228.30" y="447.02" font-size="6.6" fill="#4a4a52" text-anchor="middle" font-weight="bold" textLength="17.5" lengthAdjust="spacingAndGlyphs" >Noise</text>
<line x1="207.20" y1="449.15" x2="249.40" y2="449.15" stroke="#b4b8c8" stroke-width="0.8" />
<text x="228.30" y="455.95" font-size="6.6" fill="#4a4a52" text-anchor="middle" font-weight="bold" textLength="13.5" lengthAdjust="spacingAndGlyphs" >S&amp;H</text>
<line x1="207.20" y1="458.08" x2="249.40" y2="458.08" stroke="#b4b8c8" stroke-width="0.8" />
<text x="228.30" y="464.88" font-size="6.6" fill="#4a4a52" text-anchor="middle" font-weight="bold" textLength="27.5" lengthAdjust="spacingAndGlyphs" >Envelope</text>
<line x1="207.20" y1="467.01" x2="249.40" y2="467.01" stroke="#b4b8c8" stroke-width="0.8" />
<text x="228.30" y="473.81" font-size="6.6" fill="#4a4a52" text-anchor="middle" font-weight="bold" textLength="26.0" lengthAdjust="spacingAndGlyphs" >Step Seq</text>
<line x1="267.50" y1="413.60" x2="521.00" y2="413.60" stroke="#d9800c" stroke-width="0.9" />
<line x1="267.50" y1="441.40" x2="521.00" y2="441.40" stroke="#d9800c" stroke-width="0.9" />
<line x1="267.50" y1="469.40" x2="521.00" y2="469.40" stroke="#d9800c" stroke-width="0.9" />
<polyline points="267.3,442.9 268.3,439.1 269.3,435.4 270.3,431.7 271.3,428.3 272.3,425.1 273.3,422.1 274.3,419.6 275.3,417.5 276.3,415.8 277.3,414.5 278.3,413.8 279.3,413.6 280.3,413.9 281.3,414.7 282.3,416.1 283.3,417.8 284.3,420.1 285.3,422.7 286.3,425.7 287.3,428.9 288.3,432.4 289.3,436.1 290.3,439.9 291.3,443.7 292.3,447.4 293.3,451.1 294.3,454.5 295.3,457.7 296.3,460.7 297.3,463.2 298.3,465.3 299.3,467.0 300.3,468.3 301.3,469.0 302.3,469.2 303.3,468.9 304.3,468.1 305.3,466.7 306.3,465.0 307.3,462.7 308.3,460.1 309.3,457.1 310.3,453.9 311.3,450.4 312.3,446.7 313.3,442.9 314.3,439.1 315.3,435.4 316.3,431.7 317.3,428.3 318.3,425.1 319.3,422.1 320.3,419.6 321.3,417.5 322.3,415.8 323.3,414.5 324.3,413.8 325.3,413.6 326.3,413.9 327.3,414.7 328.3,416.1 329.3,417.8 330.3,420.1 331.3,422.7 332.3,425.7 333.3,428.9 334.3,432.4 335.3,436.1 336.3,439.9 337.3,443.7 338.3,447.4 339.3,451.1 340.3,454.5 341.3,457.7 342.3,460.7 343.3,463.2 344.3,465.3 345.3,467.0 346.3,468.3 347.3,469.0 348.3,469.2 349.3,468.9 350.3,468.1 351.3,466.7 352.3,465.0 353.3,462.7 354.3,460.1 355.3,457.1 356.3,453.9 357.3,450.4 358.3,446.7 359.3,442.9 360.3,439.1 361.3,435.4 362.3,431.7 363.3,428.3 364.3,425.1 365.3,422.1 366.3,419.6 367.3,417.5 368.3,415.8 369.3,414.5 370.3,413.8 371.3,413.6 372.3,413.9 373.3,414.7 374.3,416.1 375.3,417.8 376.3,420.1 377.3,422.7 378.3,425.7 379.3,428.9 380.3,432.4 381.3,436.1 382.3,439.9 383.3,443.7 384.3,447.4 385.3,451.1 386.3,454.5 387.3,457.7 388.3,460.7 389.3,463.2 390.3,465.3 391.3,467.0 392.3,468.3 393.3,469.0 394.3,469.2 395.3,468.9 396.3,468.1 397.3,466.7 398.3,465.0 399.3,462.7 400.3,460.1 401.3,457.1 402.3,453.9 403.3,450.4 404.3,446.7 405.3,442.9 406.3,439.1 407.3,435.4 408.3,431.7 409.3,428.3 410.3,425.1 411.3,422.1 412.3,419.6 413.3,417.5 414.3,415.8 415.3,414.5 416.3,413.8 417.3,413.6 418.3,413.9 419.3,414.7 420.3,416.1 421.3,417.8 422.3,420.1 423.3,422.7 424.3,425.7 425.3,428.9 426.3,432.4 427.3,436.1 428.3,439.9 429.3,443.7 430.3,447.4 431.3,451.1 432.3,454.5 433.3,457.7 434.3,460.7 435.3,463.2 436.3,465.3 437.3,467.0 438.3,468.3 439.3,469.0 440.3,469.2 441.3,468.9 442.3,468.1 443.3,466.7 444.3,465.0 445.3,462.7 446.3,460.1 447.3,457.1 448.3,453.9 449.3,450.4 450.3,446.7 451.3,442.9 452.3,439.1 453.3,435.4 454.3,431.7 455.3,428.3 456.3,425.1 457.3,422.1 458.3,419.6 459.3,417.5 460.3,415.8 461.3,414.5 462.3,413.8 463.3,413.6 464.3,413.9 465.3,414.7 466.3,416.1 467.3,417.8 468.3,420.1 469.3,422.7 470.3,425.7 471.3,428.9 472.3,432.4 473.3,436.1 474.3,439.9 475.3,443.7 476.3,447.4 477.3,451.1 478.3,454.5 479.3,457.7 480.3,460.7 481.3,463.2 482.3,465.3 483.3,467.0 484.3,468.3 485.3,469.0 486.3,469.2 487.3,468.9 488.3,468.1 489.3,466.7 490.3,465.0 491.3,462.7 492.3,460.1 493.3,457.1 494.3,453.9 495.3,450.4 496.3,446.7 497.3,442.9 498.3,439.1 499.3,435.4 500.3,431.7 501.3,428.3 502.3,425.1 503.3,422.1 504.3,419.6 505.3,417.5 506.3,415.8 507.3,414.5 508.3,413.8 509.3,413.6 510.3,413.9 511.3,414.7 512.3,416.1 513.3,417.8 514.3,420.1 515.3,422.7 516.3,425.7 517.3,428.9 518.3,432.4 519.3,436.1 520.3,439.9 521.3,443.7" fill="none" stroke="#4a1c06" stroke-width="1.5" stroke-linejoin="round"/>
<line x1="267.10" y1="470.80" x2="267.10" y2="473.00" stroke="#5a2a08" stroke-width="0.9" />
<text x="268.30" y="475.90" font-size="6.5" fill="#5a2a08" text-anchor="start" font-weight="normal" >0 s</text>
<line x1="381.80" y1="470.80" x2="381.80" y2="473.00" stroke="#5a2a08" stroke-width="0.9" />
<text x="383.00" y="475.90" font-size="6.5" fill="#5a2a08" text-anchor="start" font-weight="normal" >2.5 s</text>
<line x1="497.20" y1="470.80" x2="497.20" y2="473.00" stroke="#5a2a08" stroke-width="0.9" />
<text x="498.40" y="475.90" font-size="6.5" fill="#5a2a08" text-anchor="start" font-weight="normal" >5 s</text>
<text x="250.00" y="424.30" font-size="21.5" fill="rgba(255,255,255,0.30)" text-anchor="start" font-weight="bold" textLength="112.0" lengthAdjust="spacingAndGlyphs" >SOFTPEDIA</text>
<text x="362.50" y="410.50" font-size="5" fill="rgba(255,255,255,0.35)" text-anchor="start" font-weight="normal" >&#174;</text>
<line x1="543.20" y1="407.30" x2="575.30" y2="407.30" stroke="#4a2a08" stroke-width="1.1" />
<line x1="611.20" y1="407.30" x2="644.00" y2="407.30" stroke="#4a2a08" stroke-width="1.1" />
<text x="593.70" y="410.90" font-size="7.8" fill="#5a2e08" text-anchor="middle" font-weight="bold" textLength="29.0" lengthAdjust="spacingAndGlyphs" >LFO EG</text>
<polygon points="548.80,422.00 555.30,422.00 548.80,455.40" fill="rgba(205,205,215,0.62)" />
<line x1="548.80" y1="413.80" x2="548.80" y2="462.50" stroke="#2a1606" stroke-width="2.1" />
<line x1="542.80" y1="422.00" x2="554.80" y2="422.00" stroke="#2a1606" stroke-width="1.2" />
<line x1="542.80" y1="455.40" x2="554.80" y2="455.40" stroke="#2a1606" stroke-width="1.2" />
<rect x="543.10" y="448.20" width="11.40" height="15.20" fill="url(#vg)" rx="4.2" stroke="#686868" stroke-width="1.2" />
<line x1="545.50" y1="455.80" x2="552.10" y2="455.80" stroke="#727272" stroke-width="1.2" />
<text x="548.80" y="475.20" font-size="7.8" fill="#5a2e08" text-anchor="middle" font-weight="bold" >D</text>
<polygon points="566.50,422.00 573.00,422.00 566.50,455.40" fill="rgba(205,205,215,0.62)" />
<line x1="566.50" y1="413.80" x2="566.50" y2="462.50" stroke="#2a1606" stroke-width="2.1" />
<line x1="560.50" y1="422.00" x2="572.50" y2="422.00" stroke="#2a1606" stroke-width="1.2" />
<line x1="560.50" y1="455.40" x2="572.50" y2="455.40" stroke="#2a1606" stroke-width="1.2" />
<rect x="560.80" y="448.20" width="11.40" height="15.20" fill="url(#vg)" rx="4.2" stroke="#686868" stroke-width="1.2" />
<line x1="563.20" y1="455.80" x2="569.80" y2="455.80" stroke="#727272" stroke-width="1.2" />
<text x="566.50" y="475.20" font-size="7.8" fill="#5a2e08" text-anchor="middle" font-weight="bold" >A</text>
<polygon points="584.20,422.00 590.70,422.00 584.20,455.40" fill="rgba(205,205,215,0.62)" />
<line x1="584.20" y1="413.80" x2="584.20" y2="462.50" stroke="#2a1606" stroke-width="2.1" />
<line x1="578.20" y1="422.00" x2="590.20" y2="422.00" stroke="#2a1606" stroke-width="1.2" />
<line x1="578.20" y1="455.40" x2="590.20" y2="455.40" stroke="#2a1606" stroke-width="1.2" />
<rect x="578.50" y="448.20" width="11.40" height="15.20" fill="url(#vg)" rx="4.2" stroke="#686868" stroke-width="1.2" />
<line x1="580.90" y1="455.80" x2="587.50" y2="455.80" stroke="#727272" stroke-width="1.2" />
<text x="584.20" y="475.20" font-size="7.8" fill="#5a2e08" text-anchor="middle" font-weight="bold" >H</text>
<polygon points="601.90,422.00 608.40,422.00 601.90,455.40" fill="rgba(205,205,215,0.62)" />
<line x1="601.90" y1="413.80" x2="601.90" y2="462.50" stroke="#2a1606" stroke-width="2.1" />
<line x1="595.90" y1="422.00" x2="607.90" y2="422.00" stroke="#2a1606" stroke-width="1.2" />
<line x1="595.90" y1="455.40" x2="607.90" y2="455.40" stroke="#2a1606" stroke-width="1.2" />
<rect x="596.20" y="427.00" width="11.40" height="15.20" fill="url(#vg)" rx="4.2" stroke="#686868" stroke-width="1.2" />
<line x1="598.60" y1="434.60" x2="605.20" y2="434.60" stroke="#727272" stroke-width="1.2" />
<text x="601.90" y="475.20" font-size="7.8" fill="#5a2e08" text-anchor="middle" font-weight="bold" >D</text>
<polygon points="619.60,422.00 626.10,422.00 619.60,455.40" fill="rgba(205,205,215,0.62)" />
<line x1="619.60" y1="413.80" x2="619.60" y2="462.50" stroke="#2a1606" stroke-width="2.1" />
<line x1="613.60" y1="422.00" x2="625.60" y2="422.00" stroke="#2a1606" stroke-width="1.2" />
<line x1="613.60" y1="455.40" x2="625.60" y2="455.40" stroke="#2a1606" stroke-width="1.2" />
<rect x="613.90" y="414.00" width="11.40" height="15.20" fill="url(#vg)" rx="4.2" stroke="#686868" stroke-width="1.2" />
<line x1="616.30" y1="421.60" x2="622.90" y2="421.60" stroke="#727272" stroke-width="1.2" />
<text x="619.60" y="475.20" font-size="7.8" fill="#5a2e08" text-anchor="middle" font-weight="bold" >S</text>
<polygon points="637.30,422.00 643.80,422.00 637.30,455.40" fill="rgba(205,205,215,0.62)" />
<line x1="637.30" y1="413.80" x2="637.30" y2="462.50" stroke="#2a1606" stroke-width="2.1" />
<line x1="631.30" y1="422.00" x2="643.30" y2="422.00" stroke="#2a1606" stroke-width="1.2" />
<line x1="631.30" y1="455.40" x2="643.30" y2="455.40" stroke="#2a1606" stroke-width="1.2" />
<rect x="631.60" y="414.00" width="11.40" height="15.20" fill="url(#vg)" rx="4.2" stroke="#686868" stroke-width="1.2" />
<line x1="634.00" y1="421.60" x2="640.60" y2="421.60" stroke="#727272" stroke-width="1.2" />
<text x="637.30" y="475.20" font-size="7.8" fill="#5a2e08" text-anchor="middle" font-weight="bold" >R</text>
<rect x="660.60" y="352.30" width="6.40" height="44.40" fill="#4a92ff" />
<text transform="translate(661.8,329.4) rotate(90)" font-size="5.6" fill="#23252e" font-weight="bold" textLength="19.6" lengthAdjust="spacingAndGlyphs">SCENE</text>
<text transform="translate(661.8,364.8) rotate(90)" font-size="5.6" fill="#0c2a66" font-weight="bold" textLength="19.4" lengthAdjust="spacingAndGlyphs">ROUTE</text>
<text transform="translate(661.7,418.2) rotate(90)" font-size="5.6" fill="#5a3008" font-weight="bold" textLength="41" lengthAdjust="spacingAndGlyphs">MODULATION</text>
<line x1="670.00" y1="57.30" x2="768.00" y2="57.30" stroke="#b6b8c4" stroke-width="1" />
<line x1="670.00" y1="155.80" x2="768.00" y2="155.80" stroke="#aeb0bc" stroke-width="1.4" />
<rect x="676.00" y="63.30" width="9.00" height="9.40" fill="#707074" stroke="#2e2e32" stroke-width="1.1" />
<text x="680.50" y="70.60" font-size="6.2" fill="#f4f4f4" text-anchor="middle" font-weight="bold" >A</text>
<rect x="676.00" y="98.80" width="9.00" height="9.40" fill="#707074" stroke="#2e2e32" stroke-width="1.1" />
<text x="680.50" y="106.10" font-size="6.2" fill="#f4f4f4" text-anchor="middle" font-weight="bold" >B</text>
<rect x="691.00" y="63.30" width="16.80" height="9.40" fill="#f6f6f8" stroke="#2e2e32" stroke-width="1.1" />
<text x="699.40" y="70.50" font-size="5.8" fill="#444" text-anchor="middle" font-weight="normal" textLength="13.5" lengthAdjust="spacingAndGlyphs" >MOD</text>
<rect x="714.30" y="63.30" width="16.80" height="9.00" fill="#7c7c80" stroke="#2e2e32" stroke-width="1.1" />
<line x1="719.50" y1="67.80" x2="725.90" y2="67.80" stroke="#e6e6e8" stroke-width="1.3" />
<rect x="691.00" y="81.20" width="16.80" height="9.00" fill="#7c7c80" stroke="#2e2e32" stroke-width="1.1" />
<line x1="696.20" y1="85.70" x2="702.60" y2="85.70" stroke="#e6e6e8" stroke-width="1.3" />
<rect x="714.30" y="81.20" width="16.80" height="9.00" fill="#7c7c80" stroke="#2e2e32" stroke-width="1.1" />
<line x1="719.50" y1="85.70" x2="725.90" y2="85.70" stroke="#e6e6e8" stroke-width="1.3" />
<rect x="691.00" y="98.80" width="16.80" height="9.00" fill="#7c7c80" stroke="#2e2e32" stroke-width="1.1" />
<line x1="696.20" y1="103.30" x2="702.60" y2="103.30" stroke="#e6e6e8" stroke-width="1.3" />
<rect x="714.30" y="98.80" width="16.80" height="9.00" fill="#7c7c80" stroke="#2e2e32" stroke-width="1.1" />
<line x1="719.50" y1="103.30" x2="725.90" y2="103.30" stroke="#e6e6e8" stroke-width="1.3" />
<line x1="685.50" y1="68.00" x2="689.10" y2="68.00" stroke="#1a1a1a" stroke-width="1.1" />
<polygon points="687.80,66.00 690.60,68.00 687.80,70.00" fill="#1a1a1a" />
<line x1="708.20" y1="68.00" x2="712.50" y2="68.00" stroke="#1a1a1a" stroke-width="1.1" />
<polygon points="711.20,66.00 714.00,68.00 711.20,70.00" fill="#1a1a1a" />
<line x1="685.50" y1="103.50" x2="689.10" y2="103.50" stroke="#1a1a1a" stroke-width="1.1" />
<polygon points="687.80,101.50 690.60,103.50 687.80,105.50" fill="#1a1a1a" />
<line x1="708.20" y1="103.50" x2="712.50" y2="103.50" stroke="#1a1a1a" stroke-width="1.1" />
<polygon points="711.20,101.50 714.00,103.50 711.20,105.50" fill="#1a1a1a" />
<line x1="708.20" y1="85.90" x2="712.50" y2="85.90" stroke="#1a1a1a" stroke-width="1.1" />
<polygon points="711.20,83.90 714.00,85.90 711.20,87.90" fill="#1a1a1a" />
<polygon points="691.20,76.00 693.20,79.20 695.20,76.00" fill="#1a1a1a" />
<polygon points="691.20,94.60 693.20,91.60 695.20,94.60" fill="#1a1a1a" />
<polygon points="714.60,76.00 716.60,79.20 718.60,76.00" fill="#1a1a1a" />
<polygon points="714.60,94.60 716.60,91.60 718.60,94.60" fill="#1a1a1a" />
<line x1="693.20" y1="75.00" x2="734.40" y2="75.00" stroke="#1a1a1a" stroke-width="1.1" />
<line x1="693.20" y1="95.80" x2="734.40" y2="95.80" stroke="#1a1a1a" stroke-width="1.1" />
<line x1="693.20" y1="75.00" x2="693.20" y2="77.00" stroke="#1a1a1a" stroke-width="1.1" />
<line x1="716.60" y1="75.00" x2="716.60" y2="77.00" stroke="#1a1a1a" stroke-width="1.1" />
<line x1="693.20" y1="95.80" x2="693.20" y2="93.80" stroke="#1a1a1a" stroke-width="1.1" />
<line x1="716.60" y1="95.80" x2="716.60" y2="93.80" stroke="#1a1a1a" stroke-width="1.1" />
<path d="M731.3,67.8 H734.4 V103.3 H731.3 M731.3,85.9 H738.3" stroke="#1a1a1a" fill="none" stroke-width="1.2" />
<polygon points="736.00,83.50 739.00,85.60 736.00,87.70" fill="#1a1a1a" />
<circle cx="743" cy="85.6" r="3.5" fill="#d6d7df" stroke="#1a1a1a" stroke-width="1.4"/>
<path d="M746.3,84 L748,82 V76.4 H754.5 M754.5,94 H751.7 V86 H768" stroke="#1a1a1a" fill="none" stroke-width="1.1" />
<rect x="754.40" y="72.00" width="20.00" height="9.30" fill="#7c7c80" stroke="#2e2e32" stroke-width="1.1" />
<line x1="761.20" y1="76.65" x2="767.60" y2="76.65" stroke="#e6e6e8" stroke-width="1.3" />
<rect x="754.40" y="89.60" width="20.00" height="9.40" fill="#7c7c80" stroke="#2e2e32" stroke-width="1.1" />
<line x1="761.20" y1="94.30" x2="767.60" y2="94.30" stroke="#e6e6e8" stroke-width="1.3" />
<polygon points="679.60,120.00 800.00,114.00 800.00,120.00" fill="rgba(0,0,0,0.30)" />
<line x1="675.10" y1="120.00" x2="805.00" y2="120.00" stroke="#111" stroke-width="2" />
<line x1="679.60" y1="114.50" x2="679.60" y2="125.50" stroke="#111" stroke-width="1.2" />
<text x="737.00" y="129.30" font-size="7.5" fill="#2e2e34" text-anchor="start" font-weight="normal" textLength="38.0" lengthAdjust="spacingAndGlyphs" >FX1 Return</text>
<polygon points="679.60,139.10 800.00,133.10 800.00,139.10" fill="rgba(0,0,0,0.30)" />
<line x1="675.10" y1="139.10" x2="805.00" y2="139.10" stroke="#111" stroke-width="2" />
<line x1="679.60" y1="133.60" x2="679.60" y2="144.60" stroke="#111" stroke-width="1.2" />
<text x="737.00" y="148.20" font-size="7.5" fill="#2e2e34" text-anchor="start" font-weight="normal" textLength="38.0" lengthAdjust="spacingAndGlyphs" >FX2 Return</text>
<rect x="675.80" y="164.00" width="100.00" height="9.20" fill="#f5f5f7" rx="4.6" stroke="#b3b5c2" stroke-width="1" />
<text x="680.00" y="171.30" font-size="7.3" fill="#2e2e34" text-anchor="start" font-weight="normal" textLength="33.0" lengthAdjust="spacingAndGlyphs" >A Insert 1</text>
<text x="751.40" y="171.30" font-size="7.3" fill="#2e2e34" text-anchor="start" font-weight="normal" textLength="23.0" lengthAdjust="spacingAndGlyphs" >Rotary</text>
<text x="673.00" y="188.50" font-size="7.3" fill="#4a4c58" text-anchor="start" font-weight="normal" textLength="15.0" lengthAdjust="spacingAndGlyphs" >Rate</text>
<line x1="672.50" y1="190.50" x2="768.00" y2="190.50" stroke="#8f91a0" stroke-width="1" />
<polygon points="679.60,200.00 800.00,194.00 800.00,200.00" fill="rgba(95,127,216,0.75)" />
<line x1="675.10" y1="200.00" x2="805.00" y2="200.00" stroke="#5f7fd8" stroke-width="2" />
<line x1="679.60" y1="194.50" x2="679.60" y2="205.50" stroke="#5f7fd8" stroke-width="1.2" />
<rect x="723.80" y="194.00" width="16.00" height="12.00" fill="url(#hg)" rx="4.6" stroke="#636363" stroke-width="1.3" />
<line x1="731.30" y1="195.30" x2="731.30" y2="204.70" stroke="#d2d2d2" stroke-width="0.9" />
<line x1="732.20" y1="195.30" x2="732.20" y2="204.70" stroke="#808080" stroke-width="0.9" />
<line x1="679.60" y1="194.50" x2="679.60" y2="205.50" stroke="#3f5fc0" stroke-width="1.2" />
<text x="741.20" y="208.40" font-size="7.5" fill="#2e2e34" text-anchor="start" font-weight="normal" textLength="33.5" lengthAdjust="spacingAndGlyphs" >Horn Rate</text>
<text x="673.00" y="224.00" font-size="7.3" fill="#4a4c58" text-anchor="start" font-weight="normal" textLength="21.0" lengthAdjust="spacingAndGlyphs" >Depth</text>
<line x1="672.50" y1="226.20" x2="768.00" y2="226.20" stroke="#8f91a0" stroke-width="1" />
<polygon points="679.60,235.80 800.00,229.80 800.00,235.80" fill="rgba(0,0,0,0.30)" />
<line x1="675.10" y1="235.80" x2="805.00" y2="235.80" stroke="#111" stroke-width="2" />
<line x1="679.60" y1="230.30" x2="679.60" y2="241.30" stroke="#111" stroke-width="1.2" />
<rect x="693.60" y="229.80" width="16.00" height="12.00" fill="url(#hg)" rx="4.6" stroke="#636363" stroke-width="1.3" />
<line x1="701.10" y1="231.10" x2="701.10" y2="240.50" stroke="#d2d2d2" stroke-width="0.9" />
<line x1="702.00" y1="231.10" x2="702.00" y2="240.50" stroke="#808080" stroke-width="0.9" />
<text x="749.00" y="244.20" font-size="7.5" fill="#2e2e34" text-anchor="start" font-weight="normal" textLength="28.0" lengthAdjust="spacingAndGlyphs" >Doppler</text>
<polygon points="679.60,253.20 800.00,247.20 800.00,253.20" fill="rgba(0,0,0,0.30)" />
<line x1="675.10" y1="253.20" x2="805.00" y2="253.20" stroke="#111" stroke-width="2" />
<line x1="679.60" y1="247.70" x2="679.60" y2="258.70" stroke="#111" stroke-width="1.2" />
<rect x="701.50" y="247.20" width="16.00" height="12.00" fill="url(#hg)" rx="4.6" stroke="#636363" stroke-width="1.3" />
<line x1="709.00" y1="248.50" x2="709.00" y2="257.90" stroke="#d2d2d2" stroke-width="0.9" />
<line x1="709.90" y1="248.50" x2="709.90" y2="257.90" stroke="#808080" stroke-width="0.9" />
<text x="742.60" y="261.80" font-size="7.5" fill="#2e2e34" text-anchor="start" font-weight="normal" textLength="34.4" lengthAdjust="spacingAndGlyphs" >Amp Mod</text>
<rect x="754.30" y="466.40" width="30.00" height="11.30" fill="#ececf0" rx="5.6" stroke="#a9abb9" stroke-width="1" />
<text x="759.80" y="475.20" font-size="7.5" fill="#4a4c58" text-anchor="start" font-weight="bold" textLength="22.0" lengthAdjust="spacingAndGlyphs" >Menu</text>
</svg>
</body></html>
